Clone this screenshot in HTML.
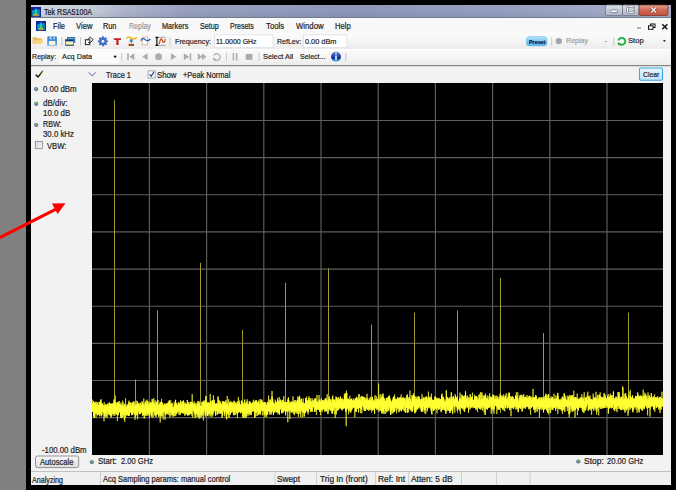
<!DOCTYPE html>
<html><head><meta charset="utf-8">
<style>
*{margin:0;padding:0;box-sizing:border-box}
html,body{width:676px;height:490px;overflow:hidden;background:#000;font-family:"Liberation Sans",sans-serif;color:#222;position:relative}
.a{position:absolute}
.t{position:absolute;white-space:nowrap;line-height:10px;transform-origin:0 0;-webkit-text-stroke:0.2px currentColor}
.sep{position:absolute;width:1px;background:#c9c9c9;border-right:1px solid #fff;width:2px}
</style></head><body>
<div class="a" style="left:0;top:0;width:26px;height:490px;background:#808080"></div>
<div class="a" style="left:31px;top:5px;width:640px;height:480px;background:#f2f2f2"></div>
<!-- title bar -->
<div class="a" style="left:31px;top:5px;width:640px;height:13px;background:linear-gradient(to right,#cdd1da 0%,#c6cad6 9%,#a9b0c8 15%,#939dbd 25%,#8a95b8 50%,#929dbe 75%,#a4aec8 100%)"></div>
<div class="a" style="left:31px;top:5px;width:640px;height:13px;background:linear-gradient(rgba(255,255,255,.06),rgba(255,255,255,0) 60%,rgba(0,0,0,.06))"></div>
<div class="a" style="left:31px;top:17px;width:640px;height:1px;background:#737b8c"></div>
<!-- menu bar -->
<div class="a" style="left:31px;top:18px;width:640px;height:15px;background:#f8f8f8"></div>
<!-- toolbars -->
<div class="a" style="left:31px;top:33px;width:640px;height:16px;background:linear-gradient(#fcfcfc,#f3f3f3 60%,#ececec)"></div>
<div class="a" style="left:31px;top:49px;width:640px;height:16px;background:linear-gradient(#fcfcfc,#f3f3f3 60%,#ececec)"></div>
<div class="a" style="left:31px;top:65px;width:640px;height:1px;background:#8a8a8a"></div>
<div class="a" style="left:31px;top:66px;width:640px;height:1px;background:#d8d8d8"></div>
<!-- plot -->
<svg class="a" style="left:92px;top:83px;background:#000" width="571" height="372" viewBox="0 0 571 372">
<path d="M57.40 0V372M114.60 0V372M171.80 0V372M229.00 0V372M286.20 0V372M343.40 0V372M400.60 0V372M457.80 0V372M515.00 0V372M0 37.45H571M0 74.60H571M0 111.75H571M0 148.90H571M0 186.05H571M0 223.20H571M0 260.35H571M0 297.50H571M0 334.65H571" stroke="#5e5e5e" stroke-width="1.15" fill="none"/>
<path d="M22.5 17.2V330M43.5 296.5V330M65.5 227.5V330M108.5 179.8V330M150.5 247.1V330M193.5 199.8V330M236.5 185.3V330M279.5 241.6V330M322.5 229.6V330M365.5 227.5V330M408.5 194.7V330M451.5 250.1V330M536.5 229.6V330" stroke="#a09c2a" stroke-width="1" fill="none"/>
<path d="M0.0 324.5L0.2 316.6 0.4 322.9 0.6 328.7 0.8 321.7 1.0 326.1 1.2 322.5 1.4 325.1 1.6 319.7 1.8 328.2 2.0 328.9 2.2 319.0 2.4 328.4 2.6 324.7 2.8 323.9 3.0 318.9 3.2 329.0 3.4 323.2 3.6 330.7 3.8 329.6 4.0 334.6 4.2 324.0 4.4 330.9 4.6 321.1 4.8 326.3 5.0 330.6 5.2 321.0 5.4 327.7 5.6 329.5 5.8 332.2 6.0 329.7 6.2 328.2 6.4 329.6 6.6 328.3 6.8 325.2 7.0 318.7 7.2 325.2 7.4 322.3 7.6 326.5 7.8 330.7 8.0 331.7 8.2 326.6 8.4 321.8 8.6 324.7 8.8 322.7 9.0 324.4 9.2 316.1 9.4 321.4 9.6 328.9 9.8 325.1 10.0 331.9 10.2 321.2 10.4 329.0 10.6 325.0 10.8 325.3 11.0 329.0 11.2 328.0 11.4 328.3 11.6 326.2 11.8 325.1 12.0 338.3 12.2 319.2 12.4 330.7 12.6 333.7 12.8 326.8 13.0 326.6 13.2 328.5 13.4 323.3 13.6 321.1 13.8 327.2 14.0 328.1 14.2 328.7 14.4 333.0 14.6 330.3 14.8 330.2 15.0 323.4 15.2 334.4 15.4 329.0 15.6 324.5 15.8 325.9 16.0 322.8 16.2 319.8 16.4 322.8 16.6 322.6 16.8 332.0 17.0 328.1 17.2 331.3 17.4 321.4 17.6 332.3 17.8 323.7 18.0 329.1 18.2 321.8 18.4 322.6 18.6 330.7 18.8 321.0 19.0 332.9 19.2 326.6 19.4 323.7 19.6 333.4 19.8 327.2 20.0 329.3 20.2 329.5 20.4 330.2 20.6 328.9 20.8 329.3 21.0 326.0 21.2 332.7 21.4 322.2 21.6 327.3 21.8 324.5 22.0 326.0 22.2 319.3 22.4 328.0 22.6 332.4 22.8 333.0 23.0 327.6 23.2 312.6 23.4 323.9 23.6 330.3 23.8 322.0 24.0 319.9 24.2 324.2 24.4 322.9 24.6 331.6 24.8 327.7 25.0 330.1 25.2 320.0 25.4 337.8 25.6 322.9 25.8 325.4 26.0 332.4 26.2 319.2 26.4 320.9 26.6 328.4 26.8 326.1 27.0 321.9 27.2 324.0 27.4 321.3 27.6 321.0 27.8 326.9 28.0 323.9 28.2 328.0 28.4 323.4 28.6 326.7 28.8 335.0 29.0 319.3 29.2 332.5 29.4 334.8 29.6 326.2 29.8 331.7 30.0 326.3 30.2 321.6 30.4 326.8 30.6 325.5 30.8 317.6 31.0 326.4 31.2 319.5 31.4 332.3 31.6 330.4 31.8 328.5 32.0 329.6 32.2 336.6 32.4 329.5 32.6 324.6 32.8 338.7 33.0 323.5 33.2 330.6 33.4 330.1 33.6 315.4 33.8 321.4 34.0 327.5 34.2 329.6 34.4 332.6 34.6 326.7 34.8 326.1 35.0 329.0 35.2 325.3 35.4 325.3 35.6 331.5 35.8 327.9 36.0 324.9 36.2 324.2 36.4 324.8 36.6 321.5 36.8 319.3 37.0 317.6 37.2 322.0 37.4 330.9 37.6 326.1 37.8 324.4 38.0 323.2 38.2 327.2 38.4 320.3 38.6 325.5 38.8 326.9 39.0 323.7 39.2 322.9 39.4 323.6 39.6 328.6 39.8 330.7 40.0 328.7 40.2 319.9 40.4 323.8 40.6 327.2 40.8 331.9 41.0 326.2 41.2 326.7 41.4 329.8 41.6 330.0 41.8 321.5 42.0 324.0 42.2 331.5 42.4 322.7 42.6 320.0 42.8 322.3 43.0 336.8 43.2 327.6 43.4 321.6 43.6 325.7 43.8 326.6 44.0 321.0 44.2 317.5 44.4 328.7 44.6 321.1 44.8 324.8 45.0 329.6 45.2 322.8 45.4 321.0 45.6 336.3 45.8 320.0 46.0 324.9 46.2 320.8 46.4 323.4 46.6 324.1 46.8 326.2 47.0 331.1 47.2 330.0 47.4 324.1 47.6 331.3 47.8 326.7 48.0 330.2 48.2 328.3 48.4 321.8 48.6 326.6 48.8 325.2 49.0 324.6 49.2 323.8 49.4 325.3 49.6 323.3 49.8 326.0 50.0 322.1 50.2 327.6 50.4 333.2 50.6 326.3 50.8 323.6 51.0 321.2 51.2 320.5 51.4 323.9 51.6 323.3 51.8 315.5 52.0 329.6 52.2 335.7 52.4 328.0 52.6 334.7 52.8 331.2 53.0 331.4 53.2 330.0 53.4 327.8 53.6 326.4 53.8 322.6 54.0 317.6 54.2 327.4 54.4 325.6 54.6 320.4 54.8 324.6 55.0 316.6 55.2 325.7 55.4 326.5 55.6 322.4 55.8 329.6 56.0 319.4 56.2 318.4 56.4 326.3 56.6 329.3 56.8 319.6 57.0 319.8 57.2 322.6 57.4 322.1 57.6 321.1 57.8 329.9 58.0 332.2 58.2 326.2 58.4 318.9 58.6 323.8 58.8 319.4 59.0 323.6 59.2 328.9 59.4 329.9 59.6 330.0 59.8 328.2 60.0 323.1 60.2 328.6 60.4 317.9 60.6 326.4 60.8 328.9 61.0 319.1 61.2 320.2 61.4 326.7 61.6 324.8 61.8 315.1 62.0 328.9 62.2 322.6 62.4 326.4 62.6 326.9 62.8 322.0 63.0 320.1 63.2 317.3 63.4 326.4 63.6 326.0 63.8 322.0 64.0 320.1 64.2 330.3 64.4 326.6 64.6 326.9 64.8 331.8 65.0 321.0 65.2 327.2 65.4 325.9 65.6 328.9 65.8 325.2 66.0 329.7 66.2 324.1 66.4 324.2 66.6 325.5 66.8 333.8 67.0 326.2 67.2 326.6 67.4 331.0 67.6 321.4 67.8 327.6 68.0 319.0 68.2 339.5 68.4 330.1 68.6 330.3 68.8 333.3 69.0 333.5 69.2 329.9 69.4 320.0 69.6 315.9 69.8 332.8 70.0 324.7 70.2 325.9 70.4 327.9 70.6 319.4 70.8 331.4 71.0 325.6 71.2 336.4 71.4 328.3 71.6 327.3 71.8 328.7 72.0 321.6 72.2 320.6 72.4 324.5 72.6 329.4 72.8 323.4 73.0 336.7 73.2 328.1 73.4 322.2 73.6 331.3 73.8 324.7 74.0 327.3 74.2 324.6 74.4 326.9 74.6 327.9 74.8 331.4 75.0 328.4 75.2 324.2 75.4 327.9 75.6 322.3 75.8 324.3 76.0 323.3 76.2 328.8 76.4 325.2 76.6 331.9 76.8 323.7 77.0 317.7 77.2 328.7 77.4 326.4 77.6 329.9 77.8 334.4 78.0 325.1 78.2 327.2 78.4 332.7 78.6 331.9 78.8 317.5 79.0 324.1 79.2 326.7 79.4 330.4 79.6 330.6 79.8 327.5 80.0 325.5 80.2 333.6 80.4 325.5 80.6 328.6 80.8 330.8 81.0 324.4 81.2 328.9 81.4 325.4 81.6 328.7 81.8 327.2 82.0 332.7 82.2 318.7 82.4 321.7 82.6 327.9 82.8 325.0 83.0 324.6 83.2 332.5 83.4 332.4 83.6 327.3 83.8 332.9 84.0 321.4 84.2 327.7 84.4 329.3 84.6 324.1 84.8 322.9 85.0 324.8 85.2 329.1 85.4 322.5 85.6 326.1 85.8 324.0 86.0 323.0 86.2 319.4 86.4 323.0 86.6 325.2 86.8 319.3 87.0 332.1 87.2 326.1 87.4 319.9 87.6 325.3 87.8 321.7 88.0 329.9 88.2 332.1 88.4 326.3 88.6 325.3 88.8 321.7 89.0 319.3 89.2 328.2 89.4 321.2 89.6 328.5 89.8 325.9 90.0 327.1 90.2 324.5 90.4 327.2 90.6 318.4 90.8 320.8 91.0 322.3 91.2 330.3 91.4 327.1 91.6 327.5 91.8 323.1 92.0 320.6 92.2 326.1 92.4 327.8 92.6 327.6 92.8 322.4 93.0 319.5 93.2 322.5 93.4 325.4 93.6 324.2 93.8 329.1 94.0 324.0 94.2 321.8 94.4 322.0 94.6 326.7 94.8 328.5 95.0 326.1 95.2 324.0 95.4 320.3 95.6 332.9 95.8 326.6 96.0 324.0 96.2 326.5 96.4 319.1 96.6 325.4 96.8 332.3 97.0 324.1 97.2 325.9 97.4 322.6 97.6 327.9 97.8 321.9 98.0 323.2 98.2 327.1 98.4 326.8 98.6 323.0 98.8 328.0 99.0 325.5 99.2 329.0 99.4 324.9 99.6 327.5 99.8 325.9 100.0 333.0 100.2 311.2 100.4 324.0 100.6 321.8 100.8 334.7 101.0 323.1 101.2 320.0 101.4 327.1 101.6 327.6 101.8 327.5 102.0 326.1 102.2 318.3 102.4 331.1 102.6 327.4 102.8 323.9 103.0 334.8 103.2 321.1 103.4 332.7 103.6 328.9 103.8 324.7 104.0 334.6 104.2 323.5 104.4 325.2 104.6 325.0 104.8 326.8 105.0 323.8 105.2 320.2 105.4 326.2 105.6 320.4 105.8 331.1 106.0 324.6 106.2 323.5 106.4 333.5 106.6 329.3 106.8 320.7 107.0 329.0 107.2 335.7 107.4 318.5 107.6 326.1 107.8 324.4 108.0 325.0 108.2 323.1 108.4 326.4 108.6 327.4 108.8 332.6 109.0 328.7 109.2 325.0 109.4 324.7 109.6 334.3 109.8 318.8 110.0 322.9 110.2 329.8 110.4 328.0 110.6 326.7 110.8 328.6 111.0 326.9 111.2 324.2 111.4 337.5 111.6 322.7 111.8 327.4 112.0 322.6 112.2 317.2 112.4 326.2 112.6 322.6 112.8 325.1 113.0 324.9 113.2 318.4 113.4 324.2 113.6 324.1 113.8 333.9 114.0 316.5 114.2 331.8 114.4 323.3 114.6 322.1 114.8 322.4 115.0 324.0 115.2 327.3 115.4 332.0 115.6 326.1 115.8 328.1 116.0 320.9 116.2 322.5 116.4 326.7 116.6 319.8 116.8 329.8 117.0 333.4 117.2 332.0 117.4 328.2 117.6 323.7 117.8 331.3 118.0 325.8 118.2 311.0 118.4 325.5 118.6 323.6 118.8 333.5 119.0 330.4 119.2 318.1 119.4 319.0 119.6 319.9 119.8 325.0 120.0 333.8 120.2 317.5 120.4 324.1 120.6 317.8 120.8 321.5 121.0 332.3 121.2 325.1 121.4 312.3 121.6 322.8 121.8 329.7 122.0 319.6 122.2 326.1 122.4 319.6 122.6 321.5 122.8 324.2 123.0 323.3 123.2 322.1 123.4 329.4 123.6 330.1 123.8 322.4 124.0 323.8 124.2 326.1 124.4 320.5 124.6 327.7 124.8 326.0 125.0 327.0 125.2 321.1 125.4 325.1 125.6 324.9 125.8 330.9 126.0 325.6 126.2 328.9 126.4 326.3 126.6 325.8 126.8 329.9 127.0 326.3 127.2 325.7 127.4 326.0 127.6 321.9 127.8 318.1 128.0 319.9 128.2 328.0 128.4 321.0 128.6 318.7 128.8 327.9 129.0 328.8 129.2 326.3 129.4 324.7 129.6 326.7 129.8 326.6 130.0 321.5 130.2 328.9 130.4 317.9 130.6 322.0 130.8 332.4 131.0 323.0 131.2 324.9 131.4 323.4 131.6 325.2 131.8 325.4 132.0 318.5 132.2 328.7 132.4 325.3 132.6 333.2 132.8 325.6 133.0 326.4 133.2 322.9 133.4 329.0 133.6 321.8 133.8 320.9 134.0 329.3 134.2 334.8 134.4 325.3 134.6 330.9 134.8 322.3 135.0 323.6 135.2 313.0 135.4 317.7 135.6 330.1 135.8 327.7 136.0 321.6 136.2 327.8 136.4 326.5 136.6 316.3 136.8 329.0 137.0 327.0 137.2 324.8 137.4 326.9 137.6 325.8 137.8 325.8 138.0 319.8 138.2 325.2 138.4 323.3 138.6 321.6 138.8 317.9 139.0 325.6 139.2 322.0 139.4 323.4 139.6 322.4 139.8 324.9 140.0 323.9 140.2 327.7 140.4 320.0 140.6 319.7 140.8 326.7 141.0 321.4 141.2 321.9 141.4 331.6 141.6 326.6 141.8 332.1 142.0 318.4 142.2 328.7 142.4 331.5 142.6 322.4 142.8 323.5 143.0 326.1 143.2 323.3 143.4 324.8 143.6 332.0 143.8 330.7 144.0 322.8 144.2 321.4 144.4 321.9 144.6 321.1 144.8 330.4 145.0 320.1 145.2 328.0 145.4 334.9 145.6 320.1 145.8 321.7 146.0 325.0 146.2 318.6 146.4 313.9 146.6 321.5 146.8 326.1 147.0 319.2 147.2 317.3 147.4 321.3 147.6 323.5 147.8 326.6 148.0 321.0 148.2 323.9 148.4 327.7 148.6 323.2 148.8 328.3 149.0 322.2 149.2 326.4 149.4 327.6 149.6 326.8 149.8 317.6 150.0 328.2 150.2 322.0 150.4 333.4 150.6 325.1 150.8 324.3 151.0 323.8 151.2 324.2 151.4 331.2 151.6 327.7 151.8 322.9 152.0 323.0 152.2 321.6 152.4 334.7 152.6 326.2 152.8 324.3 153.0 324.1 153.2 334.5 153.4 325.7 153.6 320.6 153.8 327.7 154.0 328.2 154.2 325.0 154.4 324.5 154.6 332.9 154.8 323.9 155.0 319.7 155.2 316.3 155.4 319.7 155.6 326.2 155.8 328.0 156.0 333.2 156.2 329.4 156.4 327.6 156.6 325.6 156.8 323.7 157.0 328.4 157.2 318.0 157.4 319.8 157.6 323.2 157.8 329.8 158.0 328.4 158.2 322.3 158.4 322.3 158.6 327.1 158.8 330.1 159.0 322.0 159.2 326.4 159.4 326.1 159.6 320.5 159.8 319.9 160.0 326.7 160.2 323.5 160.4 322.6 160.6 325.6 160.8 319.4 161.0 326.1 161.2 317.7 161.4 325.5 161.6 321.3 161.8 316.7 162.0 328.3 162.2 320.7 162.4 327.0 162.6 330.2 162.8 327.4 163.0 328.7 163.2 333.8 163.4 328.0 163.6 325.2 163.8 329.8 164.0 321.1 164.2 323.7 164.4 326.4 164.6 320.6 164.8 320.6 165.0 323.0 165.2 322.6 165.4 322.6 165.6 320.2 165.8 325.1 166.0 320.6 166.2 321.8 166.4 320.3 166.6 326.0 166.8 322.7 167.0 322.4 167.2 320.5 167.4 325.2 167.6 326.7 167.8 330.8 168.0 316.2 168.2 332.2 168.4 325.3 168.6 323.9 168.8 316.3 169.0 327.2 169.2 323.2 169.4 323.8 169.6 328.4 169.8 319.9 170.0 323.0 170.2 326.1 170.4 332.3 170.6 329.9 170.8 328.5 171.0 319.6 171.2 324.8 171.4 319.6 171.6 328.0 171.8 324.6 172.0 322.1 172.2 320.7 172.4 325.2 172.6 320.7 172.8 334.4 173.0 323.2 173.2 331.0 173.4 324.8 173.6 322.9 173.8 324.5 174.0 329.4 174.2 333.5 174.4 325.0 174.6 334.1 174.8 325.3 175.0 319.6 175.2 326.9 175.4 326.9 175.6 327.0 175.8 322.5 176.0 327.1 176.2 317.8 176.4 321.3 176.6 312.5 176.8 328.4 177.0 320.5 177.2 322.4 177.4 323.6 177.6 316.6 177.8 325.1 178.0 322.2 178.2 323.0 178.4 317.0 178.6 326.9 178.8 323.7 179.0 328.7 179.2 331.7 179.4 323.6 179.6 318.5 179.8 324.4 180.0 308.0 180.2 326.7 180.4 327.7 180.6 324.4 180.8 327.6 181.0 327.8 181.2 324.4 181.4 324.3 181.6 324.7 181.8 330.1 182.0 320.8 182.2 329.0 182.4 324.8 182.6 321.4 182.8 329.9 183.0 326.9 183.2 316.6 183.4 320.7 183.6 324.1 183.8 325.6 184.0 319.4 184.2 325.5 184.4 326.3 184.6 319.3 184.8 329.3 185.0 318.6 185.2 321.1 185.4 325.0 185.6 314.9 185.8 321.1 186.0 331.3 186.2 328.6 186.4 326.6 186.6 328.1 186.8 321.0 187.0 320.5 187.2 314.0 187.4 323.8 187.6 318.9 187.8 320.6 188.0 323.9 188.2 324.9 188.4 316.9 188.6 320.7 188.8 323.8 189.0 321.1 189.2 322.2 189.4 327.3 189.6 322.2 189.8 318.2 190.0 330.3 190.2 321.0 190.4 324.6 190.6 326.8 190.8 326.9 191.0 323.4 191.2 324.0 191.4 316.5 191.6 322.8 191.8 313.0 192.0 327.4 192.2 322.2 192.4 326.1 192.6 322.3 192.8 321.9 193.0 321.8 193.2 326.5 193.4 321.5 193.6 329.2 193.8 319.5 194.0 327.5 194.2 321.8 194.4 322.2 194.6 318.9 194.8 328.8 195.0 326.3 195.2 323.7 195.4 325.0 195.6 328.5 195.8 339.2 196.0 316.1 196.2 321.1 196.4 314.2 196.6 320.1 196.8 321.0 197.0 322.7 197.2 325.5 197.4 327.4 197.6 320.9 197.8 336.1 198.0 326.8 198.2 322.9 198.4 321.3 198.6 322.5 198.8 326.0 199.0 321.0 199.2 324.6 199.4 323.4 199.6 327.3 199.8 327.2 200.0 326.0 200.2 328.6 200.4 329.4 200.6 319.2 200.8 324.2 201.0 313.4 201.2 325.0 201.4 324.9 201.6 319.4 201.8 327.8 202.0 318.4 202.2 319.6 202.4 332.3 202.6 327.4 202.8 326.9 203.0 320.9 203.2 321.5 203.4 317.1 203.6 320.7 203.8 328.1 204.0 319.4 204.2 328.9 204.4 324.1 204.6 323.9 204.8 317.9 205.0 327.0 205.2 319.9 205.4 318.0 205.6 316.9 205.8 318.3 206.0 328.1 206.2 323.4 206.4 333.8 206.6 326.9 206.8 318.9 207.0 323.4 207.2 327.8 207.4 320.0 207.6 312.8 207.8 322.7 208.0 315.0 208.2 321.8 208.4 321.4 208.6 317.5 208.8 334.5 209.0 317.7 209.2 323.2 209.4 327.0 209.6 327.0 209.8 328.9 210.0 325.1 210.2 320.7 210.4 319.7 210.6 325.4 210.8 334.3 211.0 323.4 211.2 315.5 211.4 328.9 211.6 323.0 211.8 323.1 212.0 325.8 212.2 321.7 212.4 322.1 212.6 323.2 212.8 325.7 213.0 322.8 213.2 324.1 213.4 319.5 213.6 320.0 213.8 315.2 214.0 322.0 214.2 319.8 214.4 320.0 214.6 313.6 214.8 319.0 215.0 328.3 215.2 320.6 215.4 317.5 215.6 318.1 215.8 322.4 216.0 331.4 216.2 317.0 216.4 319.5 216.6 329.5 216.8 324.5 217.0 313.3 217.2 319.3 217.4 321.1 217.6 321.1 217.8 325.9 218.0 324.3 218.2 319.9 218.4 315.4 218.6 326.9 218.8 328.4 219.0 323.7 219.2 325.7 219.4 325.8 219.6 321.0 219.8 322.2 220.0 315.1 220.2 325.4 220.4 323.0 220.6 328.8 220.8 316.4 221.0 323.7 221.2 323.1 221.4 319.9 221.6 319.6 221.8 323.7 222.0 323.7 222.2 321.3 222.4 325.3 222.6 322.0 222.8 320.0 223.0 325.2 223.2 326.4 223.4 323.0 223.6 326.5 223.8 319.0 224.0 317.2 224.2 316.5 224.4 329.6 224.6 331.8 224.8 316.1 225.0 312.0 225.2 321.2 225.4 325.4 225.6 319.3 225.8 322.6 226.0 318.1 226.2 318.2 226.4 327.0 226.6 325.3 226.8 325.8 227.0 312.0 227.2 320.3 227.4 319.0 227.6 324.8 227.8 318.5 228.0 328.6 228.2 328.0 228.4 323.3 228.6 332.1 228.8 319.9 229.0 321.6 229.2 316.7 229.4 319.1 229.6 323.8 229.8 321.9 230.0 327.0 230.2 321.4 230.4 324.3 230.6 320.1 230.8 324.7 231.0 326.0 231.2 319.9 231.4 324.6 231.6 319.2 231.8 323.7 232.0 319.4 232.2 325.1 232.4 327.9 232.6 328.8 232.8 323.2 233.0 318.9 233.2 315.5 233.4 325.3 233.6 324.6 233.8 319.3 234.0 328.9 234.2 322.2 234.4 324.7 234.6 321.4 234.8 319.4 235.0 320.5 235.2 311.1 235.4 325.0 235.6 322.6 235.8 322.9 236.0 319.6 236.2 317.3 236.4 317.6 236.6 322.5 236.8 324.6 237.0 321.8 237.2 321.1 237.4 321.7 237.6 326.4 237.8 319.2 238.0 327.3 238.2 321.9 238.4 319.8 238.6 316.6 238.8 324.0 239.0 325.6 239.2 323.4 239.4 323.8 239.6 328.0 239.8 320.8 240.0 321.9 240.2 317.7 240.4 325.7 240.6 315.3 240.8 312.4 241.0 317.7 241.2 327.5 241.4 320.3 241.6 320.1 241.8 325.1 242.0 325.6 242.2 319.2 242.4 322.8 242.6 331.2 242.8 328.4 243.0 327.2 243.2 334.9 243.4 325.6 243.6 322.5 243.8 313.6 244.0 325.3 244.2 325.9 244.4 320.2 244.6 320.8 244.8 321.0 245.0 325.9 245.2 327.0 245.4 328.0 245.6 321.4 245.8 327.3 246.0 321.2 246.2 324.2 246.4 314.0 246.6 321.1 246.8 320.4 247.0 320.6 247.2 326.3 247.4 322.1 247.6 323.7 247.8 319.1 248.0 324.9 248.2 324.7 248.4 325.2 248.6 316.4 248.8 320.5 249.0 324.3 249.2 323.7 249.4 326.2 249.6 326.1 249.8 316.5 250.0 327.5 250.2 321.8 250.4 317.3 250.6 325.9 250.8 316.4 251.0 323.9 251.2 317.8 251.4 316.4 251.6 321.7 251.8 318.6 252.0 320.9 252.2 320.1 252.4 324.1 252.6 323.9 252.8 321.5 253.0 320.2 253.2 323.5 253.4 316.7 253.6 326.7 253.8 329.2 254.0 326.9 254.2 343.2 254.4 307.7 254.6 323.3 254.8 324.8 255.0 326.4 255.2 320.4 255.4 318.1 255.6 321.0 255.8 315.8 256.0 323.7 256.2 322.0 256.4 319.8 256.6 331.2 256.8 318.0 257.0 324.9 257.2 322.3 257.4 324.4 257.6 328.1 257.8 312.8 258.0 317.0 258.2 328.7 258.4 325.5 258.6 316.6 258.8 323.4 259.0 327.7 259.2 317.2 259.4 323.4 259.6 322.0 259.8 319.9 260.0 323.8 260.2 324.5 260.4 321.4 260.6 325.4 260.8 320.6 261.0 321.3 261.2 321.8 261.4 315.6 261.6 316.5 261.8 324.1 262.0 318.3 262.2 324.3 262.4 322.2 262.6 316.8 262.8 334.2 263.0 317.5 263.2 315.4 263.4 322.9 263.6 316.8 263.8 323.3 264.0 322.9 264.2 318.5 264.4 319.7 264.6 320.9 264.8 313.7 265.0 319.8 265.2 317.3 265.4 318.0 265.6 321.4 265.8 321.4 266.0 319.5 266.2 322.5 266.4 325.4 266.6 326.8 266.8 311.2 267.0 316.9 267.2 311.0 267.4 318.4 267.6 321.2 267.8 321.4 268.0 324.0 268.2 321.4 268.4 319.4 268.6 330.1 268.8 318.8 269.0 316.9 269.2 321.8 269.4 325.0 269.6 320.9 269.8 330.3 270.0 326.2 270.2 319.5 270.4 313.6 270.6 322.0 270.8 320.5 271.0 321.9 271.2 317.4 271.4 324.5 271.6 319.7 271.8 323.2 272.0 318.2 272.2 324.2 272.4 323.9 272.6 318.5 272.8 321.4 273.0 317.4 273.2 327.1 273.4 320.9 273.6 320.3 273.8 323.9 274.0 323.6 274.2 320.1 274.4 322.1 274.6 315.9 274.8 318.3 275.0 310.8 275.2 317.3 275.4 320.9 275.6 326.6 275.8 320.3 276.0 322.0 276.2 322.0 276.4 323.9 276.6 327.9 276.8 323.2 277.0 317.5 277.2 315.1 277.4 317.1 277.6 319.9 277.8 327.4 278.0 319.6 278.2 315.4 278.4 315.3 278.6 313.7 278.8 317.9 279.0 326.7 279.2 318.0 279.4 322.7 279.6 323.6 279.8 321.2 280.0 320.5 280.2 316.7 280.4 328.1 280.6 320.4 280.8 325.2 281.0 324.3 281.2 321.6 281.4 320.4 281.6 323.4 281.8 322.3 282.0 322.4 282.2 319.6 282.4 321.9 282.6 331.0 282.8 318.0 283.0 312.1 283.2 317.0 283.4 320.3 283.6 317.9 283.8 316.0 284.0 318.3 284.2 313.0 284.4 316.7 284.6 324.2 284.8 327.1 285.0 322.9 285.2 321.3 285.4 315.5 285.6 326.3 285.8 323.0 286.0 321.9 286.2 323.7 286.4 319.9 286.6 300.6 286.8 328.9 287.0 313.5 287.2 320.1 287.4 328.1 287.6 319.7 287.8 326.4 288.0 323.8 288.2 311.1 288.4 315.4 288.6 321.3 288.8 319.0 289.0 320.7 289.2 326.7 289.4 314.8 289.6 326.2 289.8 325.0 290.0 319.6 290.2 322.0 290.4 323.5 290.6 313.8 290.8 324.3 291.0 328.4 291.2 310.5 291.4 320.6 291.6 323.6 291.8 316.3 292.0 319.6 292.2 314.9 292.4 322.6 292.6 325.0 292.8 325.2 293.0 321.8 293.2 319.2 293.4 327.1 293.6 327.7 293.8 321.5 294.0 318.1 294.2 327.8 294.4 316.6 294.6 329.6 294.8 321.7 295.0 314.7 295.2 316.8 295.4 320.5 295.6 328.5 295.8 328.1 296.0 320.2 296.2 314.5 296.4 319.3 296.6 319.8 296.8 318.6 297.0 324.1 297.2 316.6 297.4 320.7 297.6 312.4 297.8 324.3 298.0 322.3 298.2 315.4 298.4 329.3 298.6 321.3 298.8 321.9 299.0 327.7 299.2 331.4 299.4 327.6 299.6 321.7 299.8 324.4 300.0 319.1 300.2 320.4 300.4 317.7 300.6 319.0 300.8 325.3 301.0 322.2 301.2 321.3 301.4 316.1 301.6 316.6 301.8 313.4 302.0 320.7 302.2 317.0 302.4 323.4 302.6 311.5 302.8 319.4 303.0 328.0 303.2 321.7 303.4 319.7 303.6 322.3 303.8 317.5 304.0 324.9 304.2 324.2 304.4 324.5 304.6 330.4 304.8 319.1 305.0 326.9 305.2 316.7 305.4 320.3 305.6 323.8 305.8 325.9 306.0 325.5 306.2 320.6 306.4 317.6 306.6 318.8 306.8 318.9 307.0 323.8 307.2 314.9 307.4 324.6 307.6 326.9 307.8 320.2 308.0 325.3 308.2 325.4 308.4 319.9 308.6 322.1 308.8 316.7 309.0 316.1 309.2 311.5 309.4 328.1 309.6 317.8 309.8 320.0 310.0 316.2 310.2 322.4 310.4 320.9 310.6 323.0 310.8 326.7 311.0 323.6 311.2 323.4 311.4 320.0 311.6 327.5 311.8 317.5 312.0 318.7 312.2 321.6 312.4 319.2 312.6 329.0 312.8 316.8 313.0 319.3 313.2 324.5 313.4 318.3 313.6 314.7 313.8 325.0 314.0 323.5 314.2 322.6 314.4 320.4 314.6 324.8 314.8 315.5 315.0 325.0 315.2 319.3 315.4 311.2 315.6 320.7 315.8 317.0 316.0 325.3 316.2 328.3 316.4 324.0 316.6 329.3 316.8 324.4 317.0 314.0 317.2 320.8 317.4 318.3 317.6 316.0 317.8 312.0 318.0 307.6 318.2 318.9 318.4 317.2 318.6 316.7 318.8 325.2 319.0 327.7 319.2 323.3 319.4 328.6 319.6 320.2 319.8 321.8 320.0 321.1 320.2 322.4 320.4 328.9 320.6 315.6 320.8 313.9 321.0 316.2 321.2 319.1 321.4 310.2 321.6 321.9 321.8 317.7 322.0 321.5 322.2 320.4 322.4 312.4 322.6 323.4 322.8 325.3 323.0 325.1 323.2 317.8 323.4 322.5 323.6 321.4 323.8 318.3 324.0 329.0 324.2 325.5 324.4 327.0 324.6 315.4 324.8 319.2 325.0 325.2 325.2 322.6 325.4 322.3 325.6 313.6 325.8 320.8 326.0 324.1 326.2 321.2 326.4 315.1 326.6 313.2 326.8 324.4 327.0 320.3 327.2 317.4 327.4 316.7 327.6 323.6 327.8 321.6 328.0 319.7 328.2 325.7 328.4 317.6 328.6 316.2 328.8 324.0 329.0 327.9 329.2 316.1 329.4 316.1 329.6 324.4 329.8 318.9 330.0 311.1 330.2 312.7 330.4 328.2 330.6 323.1 330.8 328.7 331.0 325.7 331.2 326.3 331.4 320.2 331.6 320.2 331.8 316.4 332.0 321.7 332.2 318.1 332.4 314.6 332.6 320.0 332.8 328.6 333.0 330.6 333.2 314.3 333.4 316.7 333.6 324.0 333.8 330.7 334.0 322.6 334.2 313.5 334.4 322.3 334.6 318.0 334.8 318.1 335.0 321.6 335.2 327.6 335.4 328.4 335.6 317.4 335.8 321.1 336.0 321.7 336.2 322.2 336.4 308.6 336.6 322.7 336.8 315.4 337.0 325.3 337.2 323.1 337.4 315.2 337.6 319.0 337.8 313.5 338.0 320.8 338.2 319.6 338.4 317.7 338.6 321.4 338.8 327.0 339.0 318.8 339.2 320.8 339.4 310.6 339.6 331.1 339.8 317.3 340.0 331.5 340.2 319.3 340.4 318.8 340.6 318.0 340.8 320.5 341.0 323.5 341.2 323.3 341.4 327.3 341.6 320.9 341.8 318.9 342.0 320.9 342.2 323.1 342.4 314.2 342.6 315.5 342.8 318.1 343.0 313.1 343.2 319.4 343.4 326.1 343.6 315.3 343.8 316.8 344.0 314.5 344.2 325.0 344.4 315.3 344.6 326.5 344.8 315.8 345.0 330.3 345.2 324.0 345.4 325.3 345.6 320.3 345.8 323.3 346.0 323.7 346.2 326.0 346.4 326.6 346.6 318.2 346.8 321.1 347.0 314.8 347.2 325.8 347.4 316.4 347.6 318.8 347.8 326.2 348.0 319.5 348.2 316.0 348.4 317.1 348.6 322.2 348.8 316.8 349.0 329.2 349.2 319.6 349.4 323.0 349.6 328.6 349.8 320.1 350.0 319.2 350.2 310.5 350.4 327.0 350.6 318.7 350.8 326.8 351.0 313.7 351.2 325.4 351.4 321.7 351.6 326.9 351.8 323.1 352.0 324.8 352.2 323.0 352.4 322.3 352.6 319.2 352.8 324.1 353.0 317.1 353.2 316.7 353.4 320.6 353.6 320.1 353.8 322.4 354.0 328.4 354.2 323.0 354.4 319.4 354.6 317.7 354.8 313.8 355.0 318.7 355.2 327.5 355.4 314.1 355.6 326.0 355.8 321.6 356.0 323.1 356.2 322.6 356.4 319.1 356.6 327.3 356.8 321.8 357.0 325.3 357.2 324.2 357.4 320.6 357.6 329.9 357.8 326.2 358.0 314.0 358.2 330.0 358.4 320.1 358.6 322.1 358.8 320.3 359.0 323.2 359.2 323.9 359.4 316.8 359.6 316.1 359.8 319.2 360.0 316.4 360.2 315.2 360.4 319.7 360.6 319.5 360.8 323.3 361.0 313.9 361.2 317.1 361.4 320.9 361.6 322.5 361.8 315.1 362.0 318.0 362.2 326.5 362.4 316.5 362.6 324.0 362.8 329.6 363.0 325.4 363.2 311.2 363.4 317.8 363.6 323.6 363.8 323.8 364.0 321.4 364.2 315.2 364.4 317.6 364.6 323.4 364.8 316.3 365.0 319.1 365.2 322.8 365.4 321.3 365.6 322.5 365.8 317.8 366.0 320.7 366.2 317.7 366.4 325.7 366.6 319.6 366.8 318.1 367.0 319.8 367.2 319.3 367.4 323.5 367.6 328.1 367.8 325.5 368.0 309.7 368.2 320.1 368.4 331.0 368.6 321.3 368.8 324.0 369.0 323.2 369.2 317.4 369.4 315.3 369.6 311.6 369.8 312.9 370.0 323.0 370.2 317.0 370.4 326.3 370.6 323.2 370.8 321.2 371.0 321.1 371.2 319.2 371.4 325.0 371.6 313.9 371.8 318.5 372.0 313.6 372.2 324.9 372.4 312.8 372.6 317.7 372.8 324.1 373.0 312.4 373.2 319.7 373.4 322.7 373.6 309.5 373.8 325.4 374.0 321.2 374.2 316.7 374.4 316.5 374.6 322.1 374.8 323.1 375.0 315.4 375.2 314.4 375.4 316.1 375.6 323.5 375.8 323.7 376.0 318.6 376.2 314.4 376.4 317.4 376.6 320.5 376.8 314.6 377.0 319.4 377.2 319.0 377.4 315.0 377.6 322.0 377.8 319.3 378.0 322.3 378.2 323.9 378.4 314.8 378.6 320.7 378.8 315.4 379.0 316.5 379.2 317.7 379.4 314.8 379.6 324.9 379.8 319.6 380.0 324.7 380.2 323.3 380.4 309.7 380.6 315.2 380.8 322.9 381.0 320.7 381.2 325.2 381.4 319.7 381.6 316.9 381.8 323.3 382.0 317.8 382.2 321.2 382.4 324.1 382.6 311.6 382.8 319.5 383.0 315.6 383.2 319.7 383.4 318.5 383.6 319.7 383.8 321.0 384.0 327.2 384.2 321.6 384.4 317.2 384.6 325.8 384.8 319.5 385.0 325.9 385.2 319.6 385.4 327.6 385.6 329.0 385.8 317.3 386.0 319.2 386.2 321.6 386.4 318.4 386.6 318.3 386.8 312.0 387.0 313.9 387.2 321.4 387.4 311.1 387.6 315.7 387.8 320.6 388.0 320.5 388.2 317.7 388.4 309.3 388.6 318.1 388.8 322.7 389.0 321.2 389.2 309.5 389.4 315.6 389.6 311.8 389.8 319.5 390.0 309.5 390.2 316.5 390.4 323.3 390.6 327.7 390.8 320.9 391.0 324.1 391.2 325.4 391.4 317.5 391.6 321.2 391.8 325.1 392.0 323.3 392.2 329.5 392.4 320.0 392.6 312.4 392.8 324.7 393.0 321.1 393.2 312.7 393.4 310.4 393.6 317.6 393.8 322.0 394.0 324.7 394.2 317.2 394.4 314.9 394.6 325.7 394.8 325.3 395.0 317.3 395.2 312.4 395.4 319.0 395.6 323.1 395.8 318.7 396.0 325.2 396.2 319.2 396.4 321.4 396.6 317.3 396.8 321.3 397.0 312.7 397.2 320.2 397.4 317.0 397.6 310.2 397.8 324.5 398.0 317.8 398.2 321.7 398.4 315.2 398.6 322.0 398.8 316.4 399.0 314.6 399.2 330.9 399.4 319.9 399.6 317.5 399.8 326.8 400.0 321.6 400.2 318.3 400.4 321.6 400.6 322.7 400.8 322.5 401.0 328.1 401.2 326.6 401.4 315.0 401.6 320.1 401.8 322.9 402.0 330.7 402.2 318.8 402.4 319.4 402.6 318.1 402.8 319.5 403.0 319.4 403.2 318.2 403.4 313.3 403.6 318.2 403.8 323.2 404.0 315.7 404.2 312.6 404.4 321.2 404.6 317.3 404.8 331.1 405.0 325.0 405.2 312.9 405.4 322.9 405.6 322.0 405.8 325.0 406.0 318.0 406.2 320.7 406.4 321.0 406.6 321.5 406.8 322.8 407.0 313.7 407.2 323.4 407.4 313.9 407.6 317.8 407.8 320.9 408.0 322.1 408.2 324.1 408.4 324.7 408.6 319.3 408.8 321.0 409.0 315.7 409.2 321.0 409.4 314.5 409.6 318.6 409.8 320.7 410.0 318.6 410.2 313.7 410.4 319.2 410.6 320.1 410.8 314.1 411.0 319.3 411.2 318.7 411.4 320.8 411.6 311.5 411.8 322.6 412.0 319.9 412.2 317.0 412.4 327.6 412.6 325.8 412.8 328.3 413.0 313.7 413.2 312.5 413.4 319.2 413.6 320.4 413.8 321.0 414.0 316.3 414.2 310.1 414.4 314.9 414.6 320.0 414.8 318.7 415.0 318.3 415.2 319.6 415.4 314.2 415.6 322.1 415.8 314.9 416.0 322.9 416.2 311.6 416.4 314.3 416.6 314.1 416.8 315.1 417.0 322.2 417.2 323.4 417.4 317.7 417.6 324.2 417.8 324.5 418.0 325.5 418.2 319.3 418.4 316.7 418.6 313.1 418.8 320.6 419.0 333.2 419.2 319.8 419.4 319.6 419.6 324.4 419.8 319.7 420.0 316.3 420.2 321.6 420.4 312.9 420.6 318.3 420.8 318.0 421.0 322.3 421.2 318.1 421.4 321.9 421.6 318.2 421.8 322.9 422.0 318.1 422.2 323.5 422.4 318.1 422.6 316.5 422.8 321.7 423.0 316.7 423.2 315.9 423.4 321.0 423.6 316.6 423.8 326.6 424.0 318.1 424.2 315.4 424.4 309.1 424.6 321.7 424.8 318.8 425.0 322.7 425.2 326.2 425.4 320.1 425.6 318.7 425.8 309.3 426.0 328.7 426.2 329.2 426.4 318.8 426.6 321.6 426.8 318.4 427.0 324.7 427.2 320.9 427.4 320.5 427.6 320.9 427.8 315.8 428.0 315.8 428.2 314.9 428.4 319.1 428.6 319.8 428.8 317.3 429.0 319.2 429.2 313.5 429.4 324.2 429.6 322.7 429.8 319.8 430.0 326.2 430.2 328.0 430.4 316.0 430.6 313.4 430.8 313.4 431.0 314.3 431.2 321.8 431.4 325.6 431.6 325.5 431.8 321.9 432.0 317.5 432.2 320.6 432.4 324.9 432.6 325.3 432.8 323.5 433.0 321.1 433.2 314.3 433.4 320.7 433.6 319.8 433.8 316.8 434.0 316.5 434.2 320.7 434.4 323.3 434.6 317.5 434.8 323.9 435.0 312.0 435.2 322.5 435.4 319.9 435.6 319.6 435.8 323.1 436.0 313.5 436.2 320.0 436.4 326.3 436.6 325.4 436.8 315.8 437.0 322.4 437.2 315.6 437.4 321.2 437.6 321.7 437.8 315.5 438.0 325.6 438.2 327.2 438.4 326.9 438.6 331.7 438.8 313.8 439.0 324.2 439.2 317.6 439.4 319.9 439.6 318.1 439.8 323.6 440.0 319.2 440.2 322.2 440.4 316.4 440.6 318.8 440.8 319.1 441.0 305.9 441.2 318.2 441.4 317.0 441.6 327.0 441.8 318.3 442.0 315.8 442.2 319.0 442.4 320.2 442.6 322.5 442.8 326.1 443.0 318.8 443.2 321.8 443.4 313.9 443.6 323.6 443.8 322.5 444.0 320.5 444.2 321.7 444.4 320.6 444.6 325.9 444.8 321.4 445.0 318.9 445.2 317.8 445.4 317.4 445.6 323.2 445.8 319.1 446.0 321.5 446.2 316.0 446.4 322.6 446.6 326.2 446.8 323.0 447.0 315.7 447.2 322.8 447.4 334.6 447.6 330.3 447.8 320.2 448.0 314.7 448.2 319.9 448.4 317.9 448.6 325.0 448.8 321.8 449.0 316.1 449.2 317.1 449.4 317.1 449.6 324.8 449.8 319.3 450.0 327.0 450.2 314.0 450.4 326.2 450.6 321.3 450.8 318.0 451.0 318.3 451.2 317.8 451.4 319.1 451.6 319.8 451.8 320.1 452.0 320.5 452.2 314.3 452.4 313.4 452.6 322.2 452.8 317.9 453.0 316.8 453.2 314.5 453.4 320.3 453.6 322.4 453.8 319.2 454.0 313.6 454.2 320.3 454.4 325.3 454.6 327.6 454.8 318.5 455.0 322.3 455.2 320.0 455.4 325.7 455.6 315.8 455.8 317.0 456.0 321.7 456.2 322.7 456.4 321.9 456.6 331.3 456.8 325.1 457.0 319.5 457.2 324.6 457.4 322.3 457.6 322.9 457.8 327.2 458.0 317.9 458.2 329.6 458.4 325.0 458.6 330.0 458.8 323.0 459.0 316.1 459.2 313.3 459.4 323.0 459.6 321.8 459.8 315.5 460.0 316.2 460.2 318.6 460.4 318.4 460.6 320.6 460.8 321.5 461.0 325.5 461.2 326.0 461.4 320.0 461.6 322.5 461.8 323.7 462.0 310.8 462.2 317.5 462.4 321.5 462.6 316.3 462.8 323.1 463.0 316.1 463.2 323.1 463.4 315.7 463.6 320.5 463.8 321.9 464.0 312.4 464.2 322.7 464.4 316.8 464.6 320.3 464.8 323.3 465.0 324.6 465.2 317.2 465.4 322.8 465.6 321.3 465.8 330.8 466.0 321.4 466.2 313.1 466.4 318.5 466.6 317.7 466.8 321.5 467.0 319.4 467.2 322.3 467.4 323.1 467.6 317.7 467.8 325.6 468.0 322.0 468.2 326.1 468.4 322.9 468.6 322.0 468.8 321.0 469.0 319.0 469.2 315.5 469.4 322.9 469.6 318.7 469.8 318.9 470.0 322.5 470.2 317.8 470.4 330.9 470.6 320.3 470.8 327.5 471.0 324.4 471.2 321.3 471.4 319.2 471.6 314.7 471.8 325.3 472.0 324.9 472.2 310.6 472.4 314.2 472.6 322.2 472.8 317.2 473.0 319.3 473.2 320.5 473.4 322.2 473.6 320.6 473.8 312.8 474.0 322.5 474.2 317.2 474.4 318.4 474.6 321.3 474.8 323.0 475.0 320.6 475.2 328.1 475.4 326.5 475.6 324.6 475.8 312.5 476.0 318.4 476.2 319.8 476.4 314.1 476.6 317.5 476.8 331.1 477.0 319.1 477.2 334.2 477.4 320.4 477.6 312.0 477.8 314.3 478.0 313.2 478.2 316.7 478.4 312.5 478.6 316.6 478.8 316.8 479.0 322.4 479.2 326.6 479.4 319.6 479.6 325.0 479.8 326.3 480.0 319.6 480.2 317.5 480.4 316.7 480.6 312.1 480.8 316.1 481.0 326.4 481.2 316.5 481.4 321.7 481.6 317.7 481.8 307.7 482.0 326.9 482.2 317.0 482.4 317.5 482.6 315.8 482.8 317.0 483.0 334.5 483.2 323.8 483.4 315.4 483.6 314.1 483.8 319.5 484.0 321.6 484.2 320.0 484.4 321.4 484.6 316.9 484.8 325.6 485.0 322.0 485.2 310.6 485.4 332.2 485.6 322.2 485.8 316.8 486.0 322.5 486.2 317.4 486.4 316.4 486.6 323.4 486.8 320.5 487.0 316.8 487.2 324.0 487.4 325.1 487.6 321.3 487.8 320.3 488.0 318.5 488.2 315.1 488.4 316.2 488.6 318.4 488.8 323.8 489.0 324.4 489.2 316.0 489.4 323.4 489.6 322.9 489.8 311.2 490.0 318.1 490.2 327.0 490.4 321.6 490.6 328.7 490.8 314.0 491.0 314.4 491.2 325.0 491.4 320.9 491.6 317.9 491.8 320.6 492.0 315.5 492.2 309.3 492.4 327.7 492.6 321.7 492.8 325.8 493.0 321.1 493.2 322.3 493.4 327.7 493.6 322.3 493.8 327.1 494.0 326.8 494.2 324.4 494.4 315.4 494.6 317.9 494.8 314.4 495.0 319.1 495.2 311.7 495.4 316.5 495.6 317.4 495.8 308.7 496.0 325.7 496.2 327.5 496.4 326.1 496.6 326.7 496.8 317.2 497.0 321.8 497.2 314.9 497.4 319.0 497.6 321.6 497.8 315.8 498.0 312.5 498.2 319.5 498.4 321.1 498.6 322.0 498.8 324.3 499.0 322.2 499.2 319.4 499.4 316.3 499.6 331.8 499.8 317.5 500.0 319.2 500.2 325.8 500.4 322.4 500.6 325.7 500.8 323.6 501.0 324.5 501.2 310.5 501.4 322.7 501.6 314.7 501.8 319.9 502.0 320.3 502.2 323.1 502.4 322.4 502.6 317.2 502.8 323.2 503.0 317.3 503.2 325.4 503.4 323.6 503.6 318.8 503.8 320.7 504.0 308.8 504.2 325.4 504.4 315.3 504.6 331.5 504.8 318.2 505.0 328.9 505.2 321.5 505.4 325.0 505.6 312.3 505.8 324.1 506.0 312.2 506.2 323.8 506.4 322.4 506.6 332.0 506.8 332.4 507.0 320.2 507.2 318.1 507.4 316.4 507.6 315.6 507.8 323.9 508.0 317.3 508.2 309.4 508.4 325.9 508.6 313.7 508.8 315.8 509.0 320.4 509.2 317.9 509.4 320.7 509.6 325.8 509.8 322.0 510.0 324.3 510.2 322.1 510.4 323.7 510.6 324.1 510.8 322.2 511.0 319.2 511.2 319.5 511.4 317.8 511.6 316.2 511.8 315.5 512.0 318.2 512.2 314.9 512.4 316.4 512.6 319.2 512.8 322.9 513.0 320.9 513.2 311.7 513.4 317.9 513.6 318.0 513.8 325.0 514.0 317.9 514.2 321.1 514.4 315.4 514.6 318.3 514.8 315.9 515.0 324.9 515.2 320.5 515.4 315.9 515.6 312.6 515.8 322.7 516.0 314.9 516.2 311.1 516.4 323.5 516.6 319.3 516.8 321.7 517.0 320.0 517.2 324.1 517.4 315.6 517.6 320.4 517.8 321.2 518.0 325.1 518.2 310.4 518.4 318.0 518.6 323.6 518.8 323.7 519.0 318.5 519.2 313.1 519.4 320.5 519.6 312.2 519.8 321.3 520.0 320.2 520.2 314.9 520.4 315.6 520.6 315.7 520.8 312.0 521.0 320.0 521.2 318.2 521.4 318.2 521.6 326.8 521.8 322.5 522.0 315.0 522.2 326.7 522.4 321.5 522.6 318.7 522.8 321.0 523.0 320.4 523.2 321.5 523.4 317.6 523.6 320.3 523.8 314.6 524.0 313.5 524.2 325.8 524.4 319.8 524.6 327.4 524.8 316.6 525.0 329.2 525.2 316.1 525.4 318.3 525.6 319.9 525.8 314.8 526.0 314.7 526.2 325.8 526.4 316.0 526.6 316.5 526.8 319.3 527.0 318.3 527.2 320.4 527.4 320.9 527.6 316.9 527.8 322.7 528.0 316.2 528.2 319.5 528.4 314.6 528.6 318.8 528.8 320.3 529.0 322.5 529.2 322.4 529.4 318.7 529.6 318.0 529.8 315.5 530.0 318.4 530.2 319.8 530.4 320.9 530.6 303.3 530.8 316.2 531.0 304.5 531.2 319.5 531.4 314.1 531.6 321.3 531.8 318.1 532.0 327.2 532.2 310.7 532.4 321.8 532.6 315.6 532.8 315.3 533.0 321.5 533.2 320.6 533.4 314.4 533.6 317.0 533.8 326.1 534.0 316.2 534.2 315.3 534.4 318.4 534.6 318.0 534.8 324.2 535.0 315.8 535.2 324.4 535.4 315.1 535.6 320.0 535.8 316.1 536.0 332.7 536.2 320.3 536.4 320.5 536.6 325.2 536.8 321.5 537.0 308.5 537.2 313.4 537.4 321.2 537.6 319.6 537.8 327.1 538.0 316.3 538.2 323.3 538.4 306.9 538.6 325.9 538.8 322.5 539.0 318.5 539.2 324.7 539.4 323.5 539.6 313.8 539.8 323.2 540.0 319.7 540.2 319.9 540.4 318.6 540.6 322.8 540.8 324.3 541.0 329.4 541.2 317.9 541.4 317.0 541.6 318.2 541.8 318.5 542.0 320.4 542.2 317.1 542.4 318.1 542.6 316.8 542.8 315.1 543.0 319.5 543.2 317.6 543.4 316.6 543.6 318.0 543.8 314.2 544.0 326.5 544.2 321.0 544.4 313.4 544.6 324.8 544.8 319.3 545.0 329.4 545.2 329.8 545.4 316.5 545.6 323.1 545.8 312.8 546.0 323.9 546.2 326.8 546.4 320.3 546.6 312.3 546.8 326.3 547.0 323.2 547.2 314.6 547.4 319.2 547.6 321.0 547.8 313.4 548.0 320.6 548.2 323.6 548.4 316.7 548.6 312.4 548.8 320.2 549.0 317.8 549.2 317.5 549.4 324.4 549.6 323.4 549.8 325.3 550.0 323.7 550.2 325.7 550.4 323.1 550.6 328.0 550.8 312.7 551.0 314.2 551.2 306.7 551.4 323.2 551.6 321.0 551.8 322.7 552.0 321.5 552.2 326.3 552.4 322.0 552.6 319.9 552.8 309.6 553.0 319.4 553.2 323.6 553.4 310.9 553.6 318.9 553.8 314.7 554.0 318.1 554.2 311.8 554.4 320.0 554.6 324.2 554.8 314.0 555.0 313.2 555.2 318.5 555.4 319.3 555.6 332.3 555.8 316.3 556.0 309.3 556.2 317.1 556.4 317.9 556.6 322.0 556.8 314.4 557.0 320.4 557.2 324.8 557.4 316.7 557.6 324.5 557.8 320.2 558.0 333.6 558.2 322.8 558.4 326.8 558.6 317.7 558.8 324.6 559.0 319.6 559.2 321.8 559.4 314.2 559.6 320.5 559.8 315.3 560.0 321.8 560.2 315.4 560.4 319.2 560.6 320.7 560.8 323.4 561.0 321.8 561.2 316.6 561.4 318.0 561.6 315.7 561.8 317.9 562.0 324.6 562.2 319.9 562.4 317.2 562.6 311.5 562.8 328.7 563.0 322.4 563.2 315.3 563.4 315.3 563.6 318.3 563.8 316.5 564.0 315.5 564.2 323.4 564.4 318.8 564.6 323.3 564.8 315.7 565.0 315.7 565.2 319.1 565.4 321.5 565.6 323.9 565.8 316.3 566.0 316.1 566.2 324.1 566.4 317.4 566.6 319.6 566.8 318.0 567.0 316.3 567.2 315.3 567.4 324.9 567.6 314.0 567.8 323.0 568.0 330.1 568.2 320.8 568.4 320.7 568.6 313.8 568.8 319.0 569.0 317.8 569.2 321.7 569.4 315.7 569.6 319.7 569.8 312.4 570.0 308.7 570.2 320.3 570.4 318.2 570.6 323.1 570.8 321.8 571.0 318.1" stroke="rgba(230,230,40,0.75)" stroke-width="1" fill="none"/>
<path d="M0.0 321.3L0.1 320.5 0.2 326.3 0.3 329.0 0.4 324.6 0.5 324.9 0.6 320.1 0.7 327.6 0.8 326.8 0.9 324.1 1.0 319.9 1.1 327.7 1.2 323.9 1.3 321.3 1.4 324.1 1.5 318.0 1.6 330.6 1.7 331.2 1.8 333.1 1.9 329.4 2.0 323.6 2.1 334.8 2.2 326.6 2.3 334.5 2.4 328.0 2.5 325.8 2.6 326.6 2.7 327.8 2.8 320.1 2.9 325.7 3.0 326.7 3.1 328.4 3.2 327.1 3.3 326.9 3.4 327.6 3.5 321.7 3.6 330.3 3.7 324.2 3.8 326.0 3.9 328.0 4.0 318.8 4.1 324.7 4.2 322.3 4.3 324.0 4.4 323.0 4.5 329.1 4.6 324.6 4.7 324.8 4.8 323.8 4.9 326.0 5.0 325.6 5.1 329.3 5.2 323.7 5.3 330.9 5.4 319.4 5.5 332.2 5.6 328.4 5.7 328.8 5.8 327.8 5.9 328.8 6.0 327.2 6.1 328.6 6.2 327.3 6.3 324.8 6.4 325.8 6.5 330.5 6.6 322.4 6.7 326.1 6.8 325.3 6.9 330.6 7.0 331.9 7.1 321.9 7.2 326.6 7.3 325.7 7.4 327.1 7.5 323.2 7.6 319.3 7.7 325.7 7.8 333.3 7.9 326.8 8.0 325.8 8.1 331.2 8.2 326.7 8.3 318.9 8.4 323.7 8.5 317.5 8.6 328.3 8.7 327.8 8.8 329.3 8.9 327.6 9.0 328.0 9.1 327.7 9.2 321.2 9.3 324.8 9.4 327.6 9.5 322.4 9.6 333.3 9.7 329.3 9.8 320.4 9.9 326.8 10.0 325.0 10.1 325.1 10.2 321.0 10.3 322.6 10.4 326.8 10.5 320.6 10.6 327.9 10.7 322.9 10.8 328.4 10.9 325.0 11.0 323.5 11.1 326.4 11.2 322.6 11.3 325.4 11.4 323.8 11.5 322.5 11.6 325.3 11.7 325.8 11.8 322.6 11.9 327.0 12.0 330.2 12.1 327.7 12.2 330.2 12.3 323.1 12.4 332.8 12.5 324.2 12.6 328.0 12.7 322.8 12.8 327.3 12.9 329.4 13.0 324.4 13.1 322.0 13.2 326.3 13.3 323.3 13.4 329.7 13.5 329.1 13.6 323.2 13.7 326.5 13.8 323.5 13.9 334.4 14.0 325.9 14.1 327.4 14.2 326.7 14.3 328.4 14.4 324.0 14.5 326.8 14.6 323.7 14.7 328.1 14.8 331.7 14.9 321.3 15.0 325.9 15.1 326.3 15.2 324.2 15.3 325.2 15.4 321.5 15.5 324.2 15.6 327.5 15.7 324.7 15.8 324.9 15.9 328.0 16.0 326.7 16.1 323.2 16.2 327.3 16.3 325.4 16.4 324.8 16.5 325.7 16.6 327.2 16.7 330.3 16.8 326.8 16.9 328.7 17.0 327.5 17.1 328.1 17.2 321.3 17.3 327.2 17.4 325.4 17.5 319.6 17.6 329.2 17.7 326.6 17.8 326.3 17.9 324.3 18.0 328.9 18.1 323.9 18.2 326.3 18.3 331.7 18.4 320.6 18.5 326.0 18.6 326.5 18.7 327.1 18.8 331.6 18.9 328.1 19.0 332.5 19.1 334.4 19.2 325.0 19.3 327.1 19.4 320.7 19.5 327.9 19.6 325.7 19.7 327.9 19.8 325.6 19.9 326.7 20.0 325.8 20.1 331.0 20.2 327.0 20.3 327.4 20.4 325.1 20.5 327.6 20.6 320.4 20.7 322.6 20.8 321.4 20.9 328.3 21.0 326.3 21.1 327.5 21.2 325.5 21.3 326.3 21.4 324.7 21.5 324.3 21.6 325.1 21.7 322.1 21.8 331.2 21.9 330.1 22.0 316.6 22.1 327.5 22.2 328.5 22.3 324.2 22.4 323.6 22.5 323.7 22.6 324.3 22.7 326.4 22.8 318.2 22.9 328.1 23.0 331.4 23.1 326.2 23.2 324.6 23.3 321.1 23.4 320.0 23.5 326.7 23.6 322.0 23.7 328.9 23.8 324.9 23.9 322.8 24.0 328.5 24.1 327.2 24.2 327.9 24.3 327.2 24.4 331.1 24.5 324.8 24.6 327.3 24.7 330.1 24.8 325.4 24.9 324.9 25.0 325.9 25.1 328.2 25.2 319.2 25.3 327.0 25.4 327.3 25.5 319.4 25.6 323.3 25.7 321.7 25.8 326.4 25.9 324.5 26.0 323.1 26.1 324.2 26.2 324.9 26.3 321.2 26.4 331.9 26.5 328.3 26.6 328.8 26.7 329.6 26.8 320.9 26.9 323.6 27.0 328.4 27.1 318.1 27.2 325.0 27.3 325.6 27.4 323.9 27.5 326.0 27.6 323.9 27.7 326.3 27.8 329.0 27.9 327.1 28.0 323.7 28.1 325.0 28.2 330.0 28.3 324.9 28.4 321.2 28.5 323.7 28.6 333.3 28.7 323.4 28.8 322.7 28.9 326.2 29.0 321.9 29.1 324.6 29.2 329.6 29.3 323.3 29.4 324.6 29.5 326.0 29.6 324.0 29.7 322.2 29.8 335.0 29.9 324.2 30.0 327.6 30.1 322.9 30.2 322.7 30.3 331.6 30.4 325.8 30.5 328.0 30.6 328.9 30.7 334.1 30.8 329.3 30.9 325.2 31.0 325.1 31.1 326.2 31.2 326.2 31.3 327.1 31.4 323.2 31.5 326.1 31.6 328.9 31.7 327.9 31.8 331.9 31.9 326.7 32.0 326.9 32.1 329.1 32.2 327.0 32.3 327.2 32.4 320.9 32.5 328.5 32.6 322.5 32.7 326.4 32.8 328.0 32.9 323.0 33.0 324.9 33.1 326.9 33.2 334.5 33.3 330.3 33.4 326.7 33.5 323.0 33.6 324.0 33.7 329.5 33.8 322.9 33.9 322.2 34.0 329.0 34.1 324.2 34.2 327.0 34.3 324.0 34.4 327.9 34.5 331.5 34.6 325.8 34.7 326.1 34.8 326.4 34.9 326.7 35.0 330.9 35.1 328.3 35.2 327.3 35.3 331.0 35.4 321.4 35.5 326.9 35.6 328.1 35.7 324.7 35.8 331.2 35.9 332.2 36.0 323.7 36.1 327.2 36.2 333.0 36.3 332.2 36.4 323.2 36.5 324.8 36.6 325.9 36.7 319.6 36.8 330.0 36.9 325.0 37.0 333.0 37.1 328.5 37.2 327.3 37.3 331.8 37.4 325.2 37.5 327.4 37.6 326.5 37.7 322.7 37.8 327.5 37.9 322.7 38.0 319.0 38.1 328.6 38.2 324.7 38.3 325.6 38.4 329.5 38.5 326.7 38.6 323.5 38.7 329.5 38.8 321.4 38.9 323.8 39.0 327.2 39.1 323.5 39.2 325.7 39.3 329.2 39.4 329.5 39.5 325.2 39.6 322.8 39.7 328.3 39.8 332.3 39.9 327.1 40.0 329.5 40.1 319.5 40.2 321.2 40.3 322.7 40.4 331.4 40.5 324.0 40.6 319.7 40.7 325.3 40.8 327.0 40.9 326.7 41.0 326.1 41.1 327.5 41.2 322.2 41.3 321.8 41.4 327.7 41.5 326.6 41.6 322.5 41.7 318.7 41.8 319.4 41.9 318.5 42.0 325.6 42.1 328.1 42.2 327.1 42.3 328.6 42.4 330.1 42.5 323.6 42.6 327.5 42.7 330.3 42.8 326.5 42.9 329.8 43.0 329.2 43.1 329.8 43.2 328.5 43.3 325.3 43.4 330.6 43.5 322.9 43.6 333.7 43.7 328.7 43.8 326.5 43.9 330.3 44.0 326.2 44.1 324.0 44.2 328.6 44.3 322.1 44.4 324.2 44.5 326.5 44.6 327.1 44.7 328.0 44.8 331.8 44.9 324.9 45.0 322.4 45.1 326.0 45.2 326.6 45.3 328.4 45.4 333.2 45.5 318.3 45.6 321.9 45.7 327.4 45.8 328.0 45.9 324.1 46.0 322.5 46.1 328.3 46.2 324.3 46.3 326.9 46.4 324.5 46.5 327.9 46.6 328.2 46.7 326.6 46.8 327.8 46.9 320.4 47.0 321.9 47.1 326.5 47.2 326.9 47.3 329.2 47.4 329.0 47.5 324.0 47.6 328.6 47.7 323.2 47.8 330.8 47.9 322.5 48.0 331.0 48.1 321.4 48.2 319.6 48.3 330.5 48.4 327.9 48.5 325.3 48.6 323.1 48.7 324.1 48.8 329.2 48.9 325.3 49.0 325.0 49.1 324.5 49.2 324.5 49.3 326.6 49.4 329.1 49.5 322.2 49.6 324.5 49.7 324.5 49.8 329.4 49.9 321.8 50.0 322.0 50.1 318.4 50.2 329.7 50.3 325.6 50.4 324.9 50.5 328.4 50.6 320.4 50.7 321.7 50.8 325.0 50.9 331.5 51.0 326.8 51.1 326.6 51.2 326.9 51.3 329.8 51.4 332.4 51.5 327.2 51.6 324.5 51.7 326.2 51.8 325.1 51.9 324.9 52.0 321.9 52.1 325.7 52.2 328.3 52.3 325.2 52.4 324.0 52.5 328.2 52.6 327.7 52.7 329.3 52.8 325.8 52.9 324.5 53.0 332.3 53.1 319.4 53.2 328.9 53.3 327.2 53.4 323.5 53.5 320.1 53.6 323.9 53.7 326.7 53.8 330.4 53.9 320.5 54.0 327.3 54.1 332.8 54.2 327.0 54.3 324.0 54.4 330.1 54.5 322.7 54.6 331.6 54.7 323.9 54.8 324.6 54.9 323.0 55.0 328.1 55.1 318.0 55.2 327.0 55.3 327.3 55.4 330.2 55.5 330.5 55.6 323.2 55.7 324.6 55.8 329.9 55.9 331.6 56.0 332.8 56.1 331.3 56.2 324.3 56.3 327.6 56.4 323.6 56.5 330.3 56.6 329.8 56.7 330.2 56.8 327.8 56.9 321.5 57.0 326.8 57.1 329.3 57.2 329.0 57.3 328.6 57.4 324.9 57.5 325.4 57.6 334.5 57.7 327.7 57.8 326.8 57.9 331.2 58.0 324.9 58.1 319.4 58.2 327.9 58.3 327.3 58.4 324.5 58.5 324.2 58.6 326.7 58.7 327.5 58.8 328.3 58.9 321.5 59.0 328.6 59.1 327.1 59.2 320.0 59.3 328.2 59.4 324.1 59.5 330.1 59.6 333.6 59.7 323.6 59.8 321.7 59.9 324.1 60.0 326.4 60.1 330.5 60.2 316.0 60.3 324.8 60.4 323.6 60.5 327.5 60.6 322.5 60.7 323.1 60.8 324.4 60.9 334.4 61.0 322.7 61.1 324.3 61.2 327.4 61.3 324.3 61.4 323.7 61.5 323.8 61.6 319.4 61.7 327.4 61.8 328.5 61.9 327.6 62.0 327.9 62.1 324.5 62.2 320.0 62.3 325.7 62.4 323.6 62.5 322.6 62.6 329.6 62.7 330.2 62.8 332.2 62.9 326.4 63.0 324.6 63.1 325.0 63.2 321.6 63.3 332.8 63.4 329.0 63.5 326.9 63.6 328.6 63.7 328.9 63.8 326.2 63.9 325.0 64.0 333.9 64.1 323.6 64.2 318.6 64.3 319.3 64.4 328.0 64.5 322.6 64.6 329.7 64.7 327.1 64.8 327.6 64.9 327.0 65.0 319.3 65.1 331.3 65.2 328.7 65.3 330.4 65.4 326.7 65.5 325.3 65.6 323.6 65.7 323.0 65.8 327.2 65.9 317.0 66.0 329.3 66.1 321.6 66.2 324.6 66.3 324.9 66.4 330.0 66.5 328.2 66.6 333.5 66.7 326.1 66.8 328.1 66.9 330.8 67.0 328.0 67.1 327.5 67.2 328.8 67.3 330.4 67.4 321.1 67.5 325.1 67.6 324.1 67.7 325.8 67.8 328.3 67.9 322.3 68.0 332.6 68.1 326.5 68.2 323.9 68.3 326.0 68.4 331.7 68.5 330.7 68.6 324.2 68.7 328.2 68.8 318.9 68.9 328.5 69.0 322.0 69.1 328.4 69.2 326.0 69.3 319.8 69.4 326.8 69.5 328.8 69.6 323.0 69.7 323.8 69.8 320.9 69.9 326.3 70.0 333.5 70.1 324.6 70.2 322.4 70.3 326.7 70.4 321.3 70.5 325.3 70.6 324.6 70.7 325.3 70.8 322.4 70.9 328.8 71.0 329.3 71.1 322.6 71.2 325.8 71.3 322.7 71.4 322.7 71.5 322.9 71.6 327.9 71.7 327.3 71.8 322.3 71.9 323.1 72.0 327.0 72.1 327.5 72.2 328.1 72.3 327.8 72.4 328.5 72.5 322.3 72.6 327.3 72.7 329.3 72.8 321.7 72.9 326.6 73.0 320.6 73.1 323.9 73.2 324.1 73.3 324.3 73.4 329.5 73.5 324.3 73.6 328.4 73.7 332.1 73.8 326.3 73.9 321.7 74.0 327.5 74.1 330.2 74.2 324.8 74.3 326.9 74.4 321.7 74.5 325.7 74.6 320.4 74.7 328.1 74.8 329.7 74.9 325.3 75.0 326.0 75.1 322.4 75.2 327.4 75.3 329.3 75.4 326.6 75.5 326.7 75.6 320.5 75.7 331.0 75.8 324.8 75.9 326.5 76.0 325.5 76.1 326.9 76.2 320.8 76.3 319.1 76.4 325.4 76.5 320.5 76.6 327.7 76.7 325.5 76.8 325.7 76.9 326.3 77.0 324.2 77.1 321.6 77.2 323.4 77.3 328.7 77.4 329.8 77.5 328.2 77.6 317.3 77.7 325.0 77.8 327.9 77.9 325.3 78.0 326.1 78.1 324.8 78.2 324.1 78.3 322.5 78.4 325.8 78.5 328.2 78.6 323.5 78.7 320.8 78.8 327.6 78.9 328.5 79.0 320.8 79.1 323.6 79.2 322.2 79.3 326.2 79.4 322.1 79.5 327.3 79.6 321.4 79.7 321.9 79.8 327.0 79.9 332.0 80.0 324.0 80.1 320.0 80.2 322.6 80.3 330.4 80.4 327.7 80.5 330.6 80.6 325.0 80.7 325.9 80.8 329.6 80.9 325.4 81.0 324.1 81.1 326.6 81.2 331.1 81.3 329.9 81.4 324.2 81.5 328.2 81.6 327.8 81.7 329.6 81.8 325.8 81.9 333.5 82.0 326.4 82.1 329.0 82.2 327.7 82.3 321.6 82.4 323.4 82.5 329.1 82.6 323.1 82.7 327.2 82.8 328.1 82.9 324.3 83.0 328.2 83.1 329.8 83.2 322.2 83.3 326.2 83.4 326.3 83.5 326.9 83.6 316.8 83.7 326.0 83.8 323.1 83.9 324.2 84.0 321.1 84.1 325.6 84.2 320.1 84.3 322.6 84.4 326.9 84.5 323.9 84.6 326.7 84.7 323.1 84.8 330.9 84.9 326.9 85.0 326.7 85.1 325.3 85.2 325.8 85.3 325.2 85.4 322.3 85.5 324.9 85.6 326.5 85.7 328.2 85.8 325.2 85.9 322.6 86.0 324.6 86.1 323.0 86.2 322.2 86.3 329.3 86.4 320.5 86.5 327.0 86.6 327.6 86.7 326.3 86.8 325.7 86.9 323.3 87.0 322.3 87.1 322.9 87.2 326.6 87.3 322.6 87.4 323.5 87.5 325.3 87.6 323.5 87.7 321.1 87.8 326.8 87.9 327.9 88.0 323.9 88.1 327.6 88.2 328.4 88.3 330.9 88.4 330.7 88.5 325.2 88.6 324.9 88.7 317.5 88.8 325.8 88.9 322.0 89.0 321.9 89.1 329.6 89.2 327.5 89.3 323.5 89.4 322.6 89.5 322.5 89.6 328.3 89.7 325.8 89.8 329.5 89.9 326.5 90.0 325.0 90.1 329.4 90.2 320.1 90.3 318.8 90.4 327.7 90.5 322.0 90.6 326.4 90.7 325.0 90.8 327.8 90.9 322.8 91.0 330.4 91.1 326.0 91.2 325.4 91.3 326.3 91.4 317.5 91.5 330.0 91.6 328.2 91.7 318.5 91.8 320.5 91.9 326.4 92.0 330.0 92.1 328.1 92.2 327.2 92.3 326.1 92.4 325.6 92.5 326.4 92.6 328.1 92.7 328.7 92.8 328.0 92.9 332.6 93.0 325.2 93.1 327.1 93.2 322.9 93.3 328.0 93.4 320.6 93.5 330.5 93.6 321.7 93.7 322.9 93.8 322.3 93.9 321.6 94.0 325.0 94.1 325.4 94.2 331.4 94.3 320.9 94.4 328.1 94.5 325.5 94.6 324.5 94.7 324.4 94.8 321.3 94.9 324.6 95.0 323.9 95.1 327.3 95.2 326.1 95.3 317.2 95.4 331.3 95.5 324.6 95.6 323.3 95.7 323.7 95.8 328.0 95.9 326.8 96.0 326.0 96.1 329.0 96.2 324.0 96.3 332.1 96.4 327.1 96.5 325.4 96.6 321.4 96.7 327.7 96.8 326.3 96.9 324.8 97.0 320.9 97.1 326.3 97.2 325.4 97.3 328.5 97.4 331.1 97.5 331.6 97.6 325.8 97.7 323.2 97.8 326.9 97.9 329.3 98.0 328.3 98.1 319.1 98.2 322.8 98.3 326.7 98.4 325.5 98.5 329.3 98.6 331.1 98.7 325.0 98.8 329.2 98.9 318.7 99.0 321.6 99.1 323.9 99.2 325.1 99.3 330.8 99.4 321.0 99.5 330.2 99.6 328.1 99.7 320.5 99.8 319.6 99.9 327.6 100.0 321.5 100.1 323.6 100.2 324.8 100.3 324.1 100.4 324.8 100.5 319.5 100.6 321.9 100.7 323.3 100.8 324.4 100.9 320.5 101.0 322.5 101.1 326.5 101.2 322.8 101.3 328.4 101.4 328.1 101.5 322.9 101.6 323.2 101.7 326.4 101.8 327.0 101.9 324.1 102.0 327.9 102.1 327.5 102.2 325.2 102.3 322.6 102.4 324.8 102.5 326.3 102.6 325.8 102.7 321.0 102.8 330.0 102.9 320.9 103.0 320.0 103.1 324.3 103.2 324.3 103.3 329.1 103.4 323.6 103.5 325.2 103.6 329.3 103.7 324.7 103.8 325.9 103.9 323.3 104.0 331.1 104.1 324.6 104.2 322.9 104.3 324.0 104.4 330.5 104.5 325.0 104.6 325.0 104.7 325.8 104.8 329.1 104.9 324.6 105.0 321.9 105.1 322.3 105.2 319.5 105.3 326.5 105.4 330.4 105.5 324.4 105.6 325.5 105.7 324.7 105.8 325.5 105.9 333.9 106.0 325.2 106.1 317.9 106.2 326.4 106.3 327.6 106.4 325.9 106.5 325.4 106.6 325.8 106.7 323.0 106.8 331.2 106.9 331.3 107.0 329.8 107.1 328.0 107.2 325.4 107.3 322.7 107.4 327.3 107.5 328.5 107.6 320.5 107.7 326.6 107.8 323.3 107.9 325.7 108.0 335.0 108.1 327.9 108.2 329.2 108.3 324.0 108.4 325.1 108.5 322.8 108.6 327.7 108.7 323.7 108.8 326.5 108.9 327.9 109.0 323.1 109.1 326.7 109.2 323.1 109.3 323.5 109.4 331.4 109.5 326.6 109.6 326.1 109.7 323.0 109.8 327.3 109.9 328.1 110.0 327.4 110.1 328.0 110.2 332.5 110.3 328.5 110.4 319.4 110.5 322.8 110.6 326.8 110.7 325.6 110.8 327.5 110.9 330.0 111.0 323.2 111.1 325.9 111.2 326.8 111.3 318.2 111.4 326.2 111.5 320.9 111.6 329.8 111.7 329.6 111.8 322.2 111.9 325.7 112.0 320.4 112.1 320.5 112.2 319.0 112.3 325.7 112.4 323.1 112.5 321.1 112.6 321.5 112.7 325.7 112.8 325.3 112.9 327.2 113.0 326.1 113.1 332.5 113.2 324.9 113.3 321.9 113.4 319.9 113.5 327.2 113.6 329.1 113.7 327.5 113.8 321.0 113.9 312.9 114.0 323.5 114.1 320.6 114.2 324.7 114.3 321.7 114.4 327.5 114.5 319.6 114.6 328.6 114.7 325.1 114.8 326.0 114.9 326.3 115.0 327.1 115.1 321.8 115.2 324.0 115.3 322.2 115.4 324.5 115.5 332.9 115.6 320.5 115.7 331.0 115.8 324.5 115.9 320.2 116.0 319.2 116.1 323.6 116.2 327.2 116.3 331.3 116.4 323.4 116.5 326.3 116.6 322.4 116.7 325.3 116.8 325.1 116.9 319.7 117.0 322.4 117.1 320.2 117.2 322.1 117.3 330.7 117.4 327.1 117.5 330.8 117.6 327.0 117.7 324.8 117.8 324.8 117.9 329.0 118.0 320.9 118.1 325.6 118.2 321.4 118.3 324.4 118.4 324.0 118.5 329.3 118.6 318.6 118.7 319.3 118.8 324.8 118.9 323.6 119.0 322.3 119.1 323.7 119.2 331.1 119.3 329.0 119.4 327.2 119.5 329.4 119.6 323.1 119.7 322.7 119.8 324.0 119.9 328.3 120.0 327.9 120.1 323.0 120.2 325.3 120.3 332.1 120.4 318.3 120.5 317.2 120.6 325.1 120.7 322.3 120.8 324.1 120.9 322.0 121.0 324.0 121.1 328.3 121.2 325.6 121.3 326.9 121.4 320.5 121.5 327.0 121.6 323.7 121.7 327.1 121.8 325.3 121.9 319.7 122.0 325.0 122.1 316.8 122.2 316.8 122.3 323.1 122.4 320.2 122.5 324.3 122.6 324.4 122.7 327.9 122.8 324.2 122.9 321.1 123.0 323.3 123.1 327.9 123.2 323.5 123.3 321.2 123.4 324.6 123.5 325.0 123.6 332.7 123.7 327.1 123.8 323.6 123.9 320.5 124.0 322.4 124.1 323.9 124.2 325.5 124.3 322.3 124.4 321.9 124.5 326.8 124.6 327.9 124.7 322.0 124.8 324.1 124.9 322.3 125.0 320.4 125.1 323.2 125.2 331.8 125.3 327.2 125.4 327.1 125.5 323.8 125.6 329.6 125.7 324.2 125.8 323.4 125.9 324.1 126.0 313.5 126.1 318.4 126.2 324.5 126.3 321.2 126.4 325.6 126.5 326.0 126.6 328.1 126.7 328.7 126.8 324.3 126.9 317.0 127.0 321.7 127.1 330.7 127.2 327.9 127.3 326.9 127.4 323.7 127.5 320.2 127.6 326.6 127.7 328.1 127.8 325.2 127.9 322.1 128.0 324.8 128.1 321.0 128.2 322.2 128.3 328.9 128.4 330.2 128.5 330.6 128.6 328.5 128.7 322.7 128.8 321.0 128.9 320.1 129.0 324.6 129.1 324.7 129.2 326.1 129.3 327.6 129.4 321.8 129.5 324.0 129.6 323.1 129.7 330.3 129.8 324.1 129.9 327.7 130.0 321.8 130.1 334.6 130.2 331.9 130.3 323.4 130.4 326.9 130.5 326.8 130.6 329.3 130.7 321.7 130.8 328.2 130.9 322.3 131.0 320.4 131.1 318.3 131.2 324.1 131.3 327.3 131.4 325.8 131.5 323.2 131.6 326.0 131.7 325.3 131.8 324.4 131.9 319.3 132.0 323.4 132.1 322.3 132.2 319.1 132.3 323.9 132.4 319.9 132.5 319.3 132.6 330.8 132.7 322.5 132.8 326.8 132.9 319.9 133.0 321.6 133.1 328.9 133.2 328.2 133.3 321.7 133.4 325.3 133.5 319.0 133.6 325.8 133.7 321.2 133.8 327.2 133.9 317.4 134.0 329.1 134.1 323.2 134.2 321.2 134.3 326.7 134.4 331.2 134.5 329.3 134.6 322.6 134.7 336.3 134.8 323.7 134.9 322.2 135.0 327.3 135.1 320.5 135.2 327.5 135.3 325.9 135.4 329.6 135.5 328.7 135.6 327.0 135.7 327.5 135.8 329.9 135.9 324.6 136.0 324.8 136.1 331.2 136.2 322.8 136.3 322.0 136.4 331.4 136.5 323.8 136.6 328.4 136.7 324.9 136.8 322.6 136.9 325.1 137.0 334.7 137.1 325.3 137.2 328.9 137.3 324.5 137.4 325.3 137.5 327.4 137.6 324.7 137.7 321.2 137.8 322.2 137.9 318.9 138.0 321.8 138.1 324.6 138.2 331.9 138.3 319.9 138.4 321.0 138.5 327.1 138.6 330.1 138.7 323.0 138.8 319.2 138.9 326.4 139.0 325.1 139.1 327.0 139.2 322.4 139.3 319.8 139.4 324.6 139.5 325.4 139.6 321.5 139.7 324.0 139.8 329.7 139.9 323.7 140.0 323.3 140.1 326.7 140.2 324.6 140.3 319.8 140.4 319.6 140.5 326.8 140.6 325.5 140.7 323.2 140.8 320.9 140.9 327.5 141.0 328.9 141.1 328.7 141.2 325.3 141.3 323.3 141.4 321.2 141.5 330.9 141.6 327.2 141.7 324.7 141.8 326.9 141.9 332.3 142.0 318.8 142.1 317.8 142.2 323.7 142.3 327.9 142.4 326.8 142.5 326.3 142.6 328.6 142.7 323.0 142.8 328.9 142.9 324.4 143.0 326.7 143.1 325.3 143.2 320.2 143.3 319.5 143.4 322.8 143.5 326.7 143.6 323.8 143.7 325.7 143.8 324.4 143.9 326.3 144.0 322.9 144.1 320.6 144.2 326.0 144.3 329.6 144.4 328.0 144.5 323.9 144.6 324.3 144.7 328.1 144.8 324.9 144.9 329.1 145.0 325.8 145.1 330.1 145.2 318.4 145.3 319.2 145.4 328.2 145.5 331.4 145.6 326.3 145.7 325.7 145.8 325.9 145.9 329.7 146.0 323.5 146.1 326.1 146.2 322.2 146.3 329.0 146.4 321.0 146.5 326.9 146.6 324.5 146.7 329.6 146.8 325.0 146.9 326.6 147.0 324.5 147.1 328.5 147.2 321.7 147.3 328.3 147.4 319.3 147.5 328.4 147.6 324.5 147.7 327.3 147.8 324.3 147.9 321.0 148.0 328.7 148.1 323.5 148.2 328.4 148.3 323.5 148.4 325.5 148.5 324.0 148.6 330.1 148.7 325.1 148.8 330.2 148.9 327.0 149.0 325.4 149.1 322.4 149.2 328.3 149.3 329.0 149.4 317.8 149.5 326.6 149.6 323.3 149.7 326.7 149.8 324.4 149.9 323.5 150.0 321.5 150.1 325.6 150.2 327.3 150.3 321.7 150.4 320.9 150.5 323.3 150.6 321.3 150.7 322.1 150.8 318.9 150.9 327.0 151.0 324.0 151.1 324.2 151.2 335.0 151.3 326.0 151.4 325.8 151.5 327.5 151.6 320.9 151.7 322.6 151.8 325.5 151.9 329.9 152.0 324.4 152.1 325.7 152.2 321.4 152.3 324.2 152.4 325.8 152.5 322.2 152.6 321.8 152.7 316.6 152.8 332.5 152.9 327.4 153.0 325.0 153.1 327.1 153.2 319.9 153.3 325.6 153.4 328.5 153.5 326.7 153.6 328.0 153.7 329.2 153.8 325.8 153.9 325.4 154.0 326.6 154.1 334.6 154.2 324.5 154.3 321.7 154.4 322.6 154.5 328.6 154.6 325.6 154.7 322.9 154.8 318.7 154.9 327.8 155.0 327.5 155.1 325.7 155.2 328.1 155.3 330.5 155.4 328.5 155.5 323.9 155.6 324.2 155.7 325.4 155.8 321.0 155.9 326.4 156.0 320.7 156.1 322.6 156.2 331.0 156.3 326.8 156.4 325.4 156.5 323.6 156.6 323.1 156.7 324.8 156.8 327.8 156.9 322.0 157.0 323.7 157.1 323.9 157.2 326.4 157.3 327.4 157.4 324.9 157.5 327.9 157.6 322.1 157.7 329.3 157.8 318.8 157.9 332.1 158.0 321.9 158.1 322.7 158.2 321.0 158.3 325.1 158.4 319.3 158.5 322.4 158.6 325.7 158.7 327.1 158.8 324.4 158.9 324.7 159.0 327.1 159.1 331.9 159.2 332.1 159.3 325.2 159.4 320.9 159.5 323.9 159.6 322.3 159.7 326.4 159.8 323.4 159.9 323.9 160.0 324.5 160.1 328.7 160.2 326.5 160.3 320.1 160.4 322.2 160.5 324.2 160.6 326.4 160.7 328.5 160.8 324.8 160.9 327.2 161.0 323.3 161.1 320.9 161.2 322.0 161.3 324.0 161.4 324.0 161.5 321.5 161.6 328.0 161.7 321.0 161.8 320.1 161.9 327.9 162.0 323.8 162.1 327.6 162.2 319.4 162.3 320.2 162.4 328.0 162.5 325.6 162.6 331.0 162.7 333.8 162.8 334.7 162.9 318.6 163.0 318.8 163.1 328.2 163.2 329.2 163.3 327.6 163.4 318.4 163.5 327.9 163.6 328.6 163.7 319.0 163.8 323.1 163.9 323.8 164.0 325.8 164.1 317.0 164.2 329.8 164.3 328.4 164.4 317.7 164.5 325.7 164.6 324.0 164.7 324.5 164.8 323.5 164.9 321.6 165.0 320.4 165.1 333.0 165.2 322.5 165.3 326.3 165.4 325.6 165.5 326.0 165.6 326.2 165.7 327.9 165.8 318.9 165.9 320.5 166.0 324.7 166.1 326.5 166.2 322.4 166.3 324.1 166.4 322.4 166.5 331.9 166.6 317.7 166.7 322.2 166.8 328.9 166.9 326.1 167.0 325.2 167.1 328.2 167.2 324.4 167.3 322.7 167.4 327.7 167.5 322.4 167.6 328.6 167.7 326.8 167.8 327.7 167.9 322.2 168.0 330.7 168.1 324.8 168.2 329.9 168.3 329.0 168.4 321.3 168.5 326.4 168.6 320.3 168.7 321.8 168.8 325.3 168.9 318.1 169.0 322.7 169.1 319.3 169.2 324.2 169.3 326.2 169.4 326.0 169.5 321.6 169.6 326.1 169.7 324.8 169.8 320.3 169.9 316.8 170.0 319.5 170.1 322.4 170.2 319.8 170.3 327.2 170.4 322.5 170.5 320.9 170.6 320.9 170.7 324.8 170.8 319.0 170.9 321.5 171.0 322.3 171.1 322.4 171.2 327.9 171.3 327.2 171.4 322.7 171.5 323.8 171.6 326.6 171.7 320.2 171.8 326.4 171.9 321.4 172.0 325.3 172.1 321.4 172.2 332.1 172.3 323.3 172.4 323.3 172.5 323.6 172.6 326.0 172.7 319.4 172.8 324.3 172.9 319.4 173.0 328.0 173.1 323.2 173.2 324.3 173.3 326.8 173.4 319.6 173.5 322.8 173.6 330.7 173.7 323.2 173.8 325.3 173.9 326.0 174.0 327.6 174.1 329.2 174.2 323.3 174.3 332.5 174.4 327.2 174.5 330.0 174.6 325.3 174.7 324.8 174.8 321.9 174.9 330.4 175.0 329.1 175.1 328.7 175.2 322.6 175.3 324.5 175.4 327.1 175.5 325.4 175.6 322.4 175.7 331.7 175.8 326.1 175.9 319.2 176.0 327.1 176.1 322.7 176.2 327.7 176.3 320.4 176.4 326.4 176.5 323.3 176.6 321.1 176.7 325.2 176.8 322.3 176.9 325.5 177.0 319.7 177.1 319.8 177.2 322.4 177.3 328.7 177.4 323.1 177.5 325.1 177.6 325.4 177.7 325.8 177.8 323.2 177.9 328.2 178.0 331.6 178.1 327.5 178.2 322.1 178.3 322.9 178.4 316.6 178.5 327.5 178.6 327.8 178.7 320.9 178.8 327.0 178.9 319.8 179.0 324.1 179.1 327.4 179.2 329.8 179.3 324.3 179.4 326.0 179.5 324.9 179.6 322.6 179.7 322.3 179.8 318.9 179.9 322.6 180.0 323.4 180.1 313.7 180.2 327.2 180.3 327.7 180.4 319.2 180.5 326.4 180.6 325.5 180.7 316.1 180.8 325.9 180.9 326.1 181.0 325.5 181.1 329.5 181.2 319.4 181.3 321.0 181.4 332.1 181.5 328.3 181.6 328.2 181.7 320.3 181.8 320.2 181.9 322.0 182.0 326.3 182.1 323.6 182.2 326.2 182.3 324.1 182.4 328.7 182.5 322.9 182.6 328.2 182.7 321.1 182.8 324.4 182.9 325.4 183.0 324.8 183.1 323.4 183.2 321.4 183.3 321.7 183.4 325.0 183.5 318.5 183.6 328.1 183.7 323.5 183.8 324.3 183.9 321.0 184.0 323.7 184.1 323.8 184.2 323.6 184.3 328.4 184.4 329.2 184.5 325.2 184.6 322.5 184.7 326.6 184.8 319.8 184.9 320.1 185.0 321.7 185.1 321.6 185.2 324.7 185.3 326.0 185.4 329.0 185.5 325.2 185.6 322.1 185.7 317.4 185.8 322.4 185.9 319.0 186.0 328.6 186.1 322.3 186.2 327.3 186.3 325.0 186.4 326.8 186.5 324.9 186.6 325.3 186.7 330.2 186.8 317.8 186.9 328.1 187.0 320.0 187.1 327.7 187.2 325.9 187.3 322.4 187.4 323.2 187.5 331.5 187.6 326.3 187.7 323.2 187.8 326.0 187.9 323.9 188.0 320.2 188.1 322.6 188.2 316.6 188.3 318.4 188.4 318.2 188.5 319.1 188.6 319.3 188.7 321.5 188.8 323.3 188.9 324.5 189.0 323.1 189.1 326.5 189.2 321.4 189.3 326.7 189.4 320.4 189.5 322.8 189.6 322.7 189.7 330.2 189.8 320.3 189.9 320.6 190.0 324.6 190.1 329.6 190.2 316.9 190.3 320.3 190.4 326.8 190.5 318.0 190.6 324.4 190.7 327.4 190.8 323.5 190.9 326.1 191.0 327.0 191.1 322.1 191.2 326.0 191.3 328.0 191.4 324.3 191.5 323.1 191.6 329.4 191.7 321.1 191.8 320.2 191.9 318.8 192.0 325.4 192.1 325.5 192.2 322.6 192.3 325.0 192.4 319.2 192.5 321.2 192.6 327.7 192.7 319.3 192.8 325.2 192.9 327.1 193.0 325.5 193.1 326.5 193.2 324.2 193.3 326.3 193.4 320.7 193.5 322.7 193.6 332.3 193.7 320.2 193.8 321.2 193.9 326.5 194.0 321.7 194.1 319.3 194.2 321.8 194.3 322.5 194.4 323.5 194.5 324.6 194.6 323.8 194.7 327.3 194.8 328.2 194.9 321.7 195.0 323.0 195.1 319.2 195.2 325.3 195.3 327.4 195.4 325.0 195.5 327.4 195.6 325.3 195.7 326.7 195.8 328.4 195.9 321.8 196.0 324.2 196.1 322.5 196.2 317.1 196.3 322.8 196.4 314.9 196.5 321.6 196.6 325.1 196.7 327.0 196.8 321.1 196.9 321.6 197.0 317.6 197.1 327.6 197.2 328.8 197.3 324.7 197.4 322.1 197.5 321.0 197.6 326.1 197.7 325.2 197.8 322.4 197.9 324.6 198.0 324.7 198.1 323.7 198.2 326.3 198.3 324.3 198.4 324.8 198.5 322.0 198.6 319.0 198.7 322.5 198.8 325.5 198.9 327.5 199.0 321.0 199.1 323.9 199.2 329.7 199.3 324.3 199.4 318.8 199.5 324.5 199.6 320.8 199.7 322.1 199.8 318.6 199.9 324.0 200.0 328.9 200.1 322.3 200.2 321.0 200.3 323.1 200.4 321.5 200.5 323.1 200.6 325.0 200.7 324.6 200.8 323.2 200.9 328.3 201.0 325.4 201.1 324.6 201.2 323.6 201.3 320.4 201.4 322.0 201.5 321.6 201.6 325.6 201.7 319.2 201.8 331.0 201.9 324.9 202.0 323.0 202.1 320.1 202.2 320.5 202.3 327.4 202.4 326.1 202.5 320.9 202.6 317.5 202.7 324.0 202.8 324.9 202.9 322.7 203.0 326.7 203.1 328.5 203.2 321.7 203.3 324.7 203.4 321.2 203.5 323.8 203.6 325.2 203.7 323.6 203.8 324.6 203.9 327.9 204.0 319.8 204.1 330.5 204.2 324.8 204.3 324.1 204.4 326.6 204.5 325.1 204.6 322.2 204.7 320.2 204.8 319.8 204.9 321.0 205.0 323.9 205.1 326.6 205.2 317.5 205.3 320.5 205.4 320.0 205.5 322.7 205.6 322.5 205.7 325.5 205.8 323.7 205.9 330.9 206.0 313.7 206.1 319.8 206.2 327.0 206.3 318.6 206.4 316.5 206.5 317.8 206.6 322.9 206.7 317.5 206.8 326.0 206.9 317.2 207.0 320.0 207.1 319.9 207.2 325.8 207.3 325.5 207.4 328.5 207.5 313.4 207.6 320.9 207.7 324.7 207.8 325.6 207.9 323.3 208.0 330.9 208.1 322.6 208.2 321.8 208.3 319.9 208.4 327.8 208.5 319.5 208.6 320.4 208.7 319.2 208.8 324.8 208.9 320.9 209.0 321.1 209.1 323.6 209.2 323.1 209.3 319.3 209.4 320.7 209.5 326.3 209.6 315.8 209.7 323.6 209.8 321.6 209.9 326.9 210.0 324.7 210.1 319.9 210.2 325.0 210.3 321.9 210.4 328.6 210.5 324.2 210.6 320.9 210.7 328.6 210.8 320.3 210.9 319.6 211.0 320.7 211.1 324.4 211.2 323.7 211.3 324.4 211.4 328.5 211.5 325.0 211.6 324.8 211.7 321.9 211.8 330.1 211.9 321.4 212.0 325.3 212.1 320.7 212.2 320.9 212.3 333.5 212.4 327.8 212.5 325.1 212.6 320.5 212.7 320.8 212.8 320.3 212.9 322.7 213.0 326.4 213.1 327.0 213.2 322.2 213.3 321.3 213.4 330.1 213.5 326.0 213.6 315.1 213.7 321.6 213.8 324.8 213.9 328.2 214.0 320.4 214.1 326.7 214.2 320.4 214.3 317.2 214.4 321.7 214.5 319.3 214.6 324.7 214.7 322.6 214.8 322.3 214.9 325.7 215.0 318.0 215.1 322.9 215.2 322.6 215.3 326.6 215.4 328.5 215.5 325.3 215.6 320.1 215.7 318.3 215.8 326.7 215.9 326.5 216.0 323.7 216.1 328.1 216.2 319.6 216.3 319.2 216.4 322.7 216.5 327.6 216.6 319.8 216.7 324.0 216.8 315.2 216.9 321.3 217.0 324.2 217.1 323.4 217.2 322.9 217.3 326.1 217.4 324.6 217.5 317.2 217.6 325.1 217.7 320.1 217.8 320.7 217.9 320.0 218.0 320.8 218.1 325.8 218.2 318.7 218.3 321.9 218.4 318.8 218.5 319.6 218.6 320.2 218.7 318.2 218.8 321.4 218.9 329.0 219.0 323.9 219.1 324.9 219.2 323.9 219.3 324.7 219.4 326.1 219.5 327.3 219.6 322.7 219.7 318.7 219.8 319.9 219.9 327.5 220.0 328.1 220.1 325.8 220.2 323.3 220.3 321.7 220.4 321.6 220.5 323.4 220.6 323.4 220.7 322.7 220.8 320.6 220.9 321.2 221.0 321.1 221.1 322.7 221.2 317.4 221.3 317.6 221.4 321.0 221.5 321.7 221.6 323.7 221.7 320.2 221.8 324.1 221.9 319.0 222.0 318.6 222.1 320.9 222.2 323.8 222.3 325.1 222.4 325.9 222.5 325.8 222.6 328.9 222.7 316.0 222.8 321.1 222.9 321.7 223.0 328.7 223.1 322.7 223.2 325.3 223.3 315.0 223.4 319.8 223.5 319.8 223.6 319.2 223.7 320.6 223.8 322.2 223.9 323.2 224.0 320.0 224.1 323.1 224.2 320.6 224.3 325.9 224.4 318.9 224.5 326.7 224.6 323.7 224.7 326.2 224.8 319.1 224.9 318.9 225.0 325.7 225.1 325.3 225.2 320.5 225.3 324.3 225.4 320.6 225.5 326.4 225.6 321.0 225.7 319.6 225.8 319.8 225.9 324.5 226.0 323.8 226.1 321.2 226.2 324.2 226.3 319.5 226.4 320.9 226.5 322.5 226.6 321.4 226.7 319.5 226.8 326.3 226.9 320.0 227.0 324.9 227.1 322.8 227.2 320.3 227.3 317.4 227.4 326.6 227.5 316.8 227.6 321.2 227.7 317.3 227.8 328.9 227.9 322.9 228.0 320.1 228.1 318.6 228.2 318.9 228.3 325.6 228.4 321.0 228.5 318.8 228.6 318.7 228.7 323.1 228.8 319.5 228.9 327.2 229.0 325.9 229.1 324.6 229.2 325.1 229.3 323.5 229.4 315.5 229.5 324.2 229.6 325.8 229.7 325.5 229.8 324.1 229.9 318.7 230.0 328.5 230.1 323.1 230.2 325.7 230.3 321.7 230.4 322.4 230.5 317.7 230.6 319.8 230.7 320.7 230.8 317.5 230.9 317.3 231.0 320.1 231.1 320.7 231.2 325.9 231.3 321.8 231.4 321.4 231.5 324.1 231.6 324.7 231.7 326.3 231.8 323.6 231.9 321.9 232.0 317.0 232.1 322.3 232.2 319.8 232.3 320.7 232.4 324.3 232.5 322.6 232.6 326.2 232.7 322.0 232.8 318.5 232.9 324.4 233.0 321.9 233.1 327.5 233.2 315.9 233.3 322.0 233.4 321.5 233.5 324.1 233.6 320.7 233.7 321.0 233.8 319.5 233.9 315.4 234.0 318.8 234.1 325.9 234.2 324.8 234.3 328.0 234.4 323.1 234.5 316.9 234.6 327.5 234.7 324.9 234.8 323.1 234.9 325.0 235.0 319.2 235.1 326.1 235.2 324.5 235.3 318.9 235.4 323.7 235.5 323.6 235.6 322.6 235.7 322.0 235.8 321.9 235.9 331.1 236.0 323.9 236.1 317.5 236.2 320.2 236.3 323.3 236.4 318.7 236.5 324.5 236.6 326.1 236.7 323.4 236.8 325.6 236.9 321.8 237.0 316.0 237.1 322.9 237.2 313.6 237.3 322.4 237.4 322.6 237.5 318.5 237.6 320.6 237.7 323.2 237.8 324.5 237.9 320.3 238.0 321.8 238.1 319.3 238.2 323.6 238.3 326.0 238.4 320.6 238.5 316.7 238.6 317.3 238.7 325.4 238.8 327.3 238.9 316.5 239.0 327.6 239.1 320.1 239.2 320.4 239.3 321.3 239.4 326.6 239.5 320.1 239.6 320.2 239.7 323.9 239.8 322.6 239.9 323.2 240.0 322.6 240.1 330.2 240.2 326.5 240.3 330.6 240.4 313.9 240.5 315.5 240.6 329.8 240.7 325.6 240.8 325.5 240.9 318.3 241.0 324.8 241.1 324.7 241.2 318.1 241.3 324.6 241.4 323.8 241.5 316.7 241.6 316.4 241.7 327.3 241.8 319.5 241.9 322.1 242.0 324.5 242.1 321.5 242.2 323.0 242.3 317.6 242.4 322.9 242.5 316.7 242.6 318.0 242.7 324.6 242.8 318.8 242.9 324.8 243.0 321.7 243.1 322.6 243.2 317.7 243.3 323.4 243.4 323.1 243.5 320.2 243.6 320.7 243.7 321.4 243.8 323.9 243.9 321.6 244.0 323.6 244.1 325.2 244.2 331.2 244.3 322.5 244.4 317.8 244.5 322.0 244.6 324.4 244.7 314.1 244.8 316.0 244.9 323.5 245.0 322.0 245.1 318.9 245.2 320.1 245.3 321.2 245.4 319.9 245.5 322.8 245.6 315.5 245.7 321.0 245.8 325.6 245.9 320.1 246.0 321.5 246.1 317.7 246.2 320.8 246.3 324.0 246.4 321.7 246.5 327.0 246.6 321.2 246.7 316.9 246.8 323.4 246.9 318.4 247.0 325.0 247.1 324.3 247.2 318.8 247.3 315.8 247.4 323.2 247.5 318.9 247.6 319.4 247.7 321.4 247.8 317.5 247.9 320.9 248.0 325.2 248.1 320.6 248.2 322.9 248.3 321.2 248.4 313.5 248.5 318.8 248.6 324.0 248.7 321.6 248.8 315.3 248.9 317.6 249.0 319.9 249.1 320.6 249.2 325.4 249.3 320.1 249.4 320.7 249.5 322.0 249.6 322.6 249.7 326.4 249.8 325.6 249.9 320.4 250.0 323.5 250.1 315.4 250.2 319.7 250.3 322.0 250.4 316.8 250.5 326.4 250.6 324.6 250.7 324.6 250.8 323.4 250.9 324.0 251.0 321.3 251.1 322.0 251.2 317.9 251.3 325.2 251.4 321.1 251.5 318.9 251.6 319.6 251.7 325.8 251.8 320.8 251.9 322.5 252.0 321.4 252.1 325.1 252.2 320.0 252.3 321.3 252.4 311.3 252.5 318.7 252.6 314.8 252.7 325.2 252.8 320.9 252.9 320.6 253.0 322.1 253.1 323.6 253.2 318.7 253.3 310.1 253.4 317.5 253.5 323.0 253.6 326.9 253.7 324.4 253.8 328.1 253.9 321.2 254.0 314.6 254.1 320.1 254.2 319.1 254.3 324.1 254.4 327.0 254.5 323.7 254.6 319.5 254.7 320.9 254.8 310.1 254.9 325.1 255.0 318.4 255.1 326.0 255.2 321.7 255.3 320.6 255.4 324.9 255.5 318.7 255.6 317.7 255.7 323.2 255.8 318.4 255.9 321.9 256.0 318.1 256.1 315.6 256.2 323.1 256.3 319.1 256.4 320.8 256.5 316.4 256.6 325.0 256.7 317.6 256.8 327.3 256.9 317.4 257.0 317.0 257.1 321.8 257.2 319.4 257.3 322.6 257.4 322.2 257.5 322.2 257.6 322.5 257.7 323.8 257.8 321.1 257.9 322.1 258.0 323.3 258.1 317.0 258.2 324.3 258.3 316.7 258.4 316.3 258.5 319.9 258.6 322.8 258.7 320.3 258.8 329.5 258.9 317.8 259.0 320.2 259.1 319.0 259.2 316.1 259.3 324.6 259.4 326.3 259.5 322.4 259.6 324.6 259.7 315.6 259.8 318.6 259.9 326.6 260.0 326.1 260.1 321.0 260.2 322.1 260.3 320.3 260.4 321.7 260.5 319.1 260.6 323.4 260.7 322.4 260.8 317.2 260.9 322.9 261.0 322.8 261.1 322.9 261.2 322.5 261.3 317.2 261.4 320.0 261.5 324.6 261.6 321.3 261.7 323.1 261.8 317.9 261.9 318.2 262.0 322.6 262.1 321.5 262.2 319.6 262.3 324.4 262.4 324.4 262.5 322.5 262.6 323.0 262.7 322.8 262.8 320.3 262.9 322.0 263.0 317.8 263.1 320.9 263.2 320.7 263.3 321.2 263.4 320.2 263.5 325.1 263.6 328.7 263.7 315.2 263.8 325.1 263.9 323.5 264.0 321.7 264.1 327.1 264.2 324.6 264.3 321.4 264.4 328.6 264.5 319.3 264.6 324.6 264.7 314.4 264.8 320.2 264.9 324.1 265.0 315.6 265.1 324.8 265.2 319.9 265.3 316.2 265.4 325.9 265.5 319.5 265.6 325.2 265.7 317.5 265.8 324.6 265.9 321.4 266.0 322.0 266.1 322.3 266.2 318.0 266.3 319.0 266.4 318.6 266.5 324.5 266.6 329.4 266.7 320.1 266.8 317.1 266.9 323.7 267.0 322.7 267.1 324.4 267.2 315.3 267.3 317.7 267.4 318.6 267.5 325.1 267.6 323.1 267.7 316.6 267.8 323.2 267.9 322.3 268.0 323.3 268.1 323.3 268.2 323.4 268.3 324.9 268.4 323.0 268.5 319.5 268.6 317.1 268.7 318.4 268.8 322.3 268.9 313.8 269.0 325.5 269.1 318.0 269.2 318.6 269.3 326.3 269.4 322.2 269.5 319.4 269.6 319.0 269.7 318.4 269.8 313.3 269.9 321.5 270.0 323.4 270.1 313.9 270.2 315.7 270.3 321.1 270.4 322.9 270.5 322.7 270.6 322.0 270.7 316.8 270.8 314.6 270.9 318.5 271.0 317.9 271.1 313.7 271.2 316.5 271.3 315.6 271.4 320.5 271.5 319.9 271.6 320.8 271.7 321.9 271.8 322.8 271.9 321.3 272.0 326.7 272.1 327.3 272.2 320.0 272.3 320.4 272.4 323.3 272.5 328.0 272.6 323.2 272.7 314.2 272.8 323.4 272.9 320.0 273.0 315.2 273.1 326.8 273.2 321.4 273.3 323.0 273.4 323.5 273.5 319.6 273.6 328.0 273.7 319.1 273.8 321.3 273.9 317.2 274.0 323.2 274.1 321.9 274.2 317.0 274.3 319.2 274.4 325.9 274.5 316.5 274.6 319.9 274.7 323.8 274.8 318.9 274.9 317.1 275.0 321.2 275.1 315.1 275.2 315.3 275.3 319.1 275.4 323.3 275.5 317.6 275.6 324.6 275.7 326.7 275.8 326.5 275.9 320.6 276.0 317.0 276.1 321.3 276.2 320.4 276.3 318.9 276.4 325.9 276.5 317.5 276.6 323.5 276.7 323.2 276.8 325.2 276.9 323.0 277.0 324.0 277.1 321.3 277.2 317.1 277.3 324.8 277.4 316.8 277.5 321.6 277.6 318.6 277.7 323.3 277.8 319.1 277.9 317.9 278.0 326.2 278.1 326.6 278.2 320.2 278.3 321.3 278.4 318.4 278.5 320.1 278.6 321.7 278.7 322.1 278.8 316.4 278.9 317.4 279.0 319.2 279.1 325.1 279.2 322.7 279.3 323.5 279.4 318.3 279.5 319.3 279.6 319.7 279.7 324.1 279.8 326.3 279.9 318.4 280.0 325.4 280.1 314.9 280.2 318.5 280.3 324.7 280.4 324.3 280.5 313.9 280.6 321.6 280.7 319.8 280.8 320.2 280.9 317.2 281.0 320.5 281.1 318.6 281.2 322.2 281.3 327.2 281.4 319.4 281.5 321.6 281.6 319.3 281.7 323.5 281.8 318.4 281.9 322.4 282.0 319.1 282.1 318.3 282.2 317.9 282.3 316.5 282.4 321.2 282.5 330.4 282.6 320.0 282.7 325.8 282.8 321.7 282.9 318.5 283.0 319.5 283.1 324.7 283.2 318.7 283.3 322.1 283.4 324.3 283.5 320.8 283.6 321.5 283.7 317.8 283.8 319.4 283.9 319.8 284.0 319.8 284.1 325.5 284.2 322.5 284.3 322.7 284.4 320.3 284.5 316.4 284.6 323.7 284.7 323.8 284.8 324.1 284.9 317.9 285.0 325.3 285.1 322.1 285.2 324.2 285.3 316.5 285.4 324.6 285.5 321.6 285.6 320.5 285.7 319.4 285.8 320.0 285.9 318.7 286.0 325.1 286.1 322.0 286.2 326.3 286.3 321.5 286.4 318.4 286.5 321.1 286.6 322.5 286.7 321.3 286.8 317.2 286.9 318.3 287.0 322.1 287.1 319.9 287.2 318.3 287.3 319.1 287.4 319.6 287.5 323.3 287.6 320.7 287.7 316.2 287.8 316.1 287.9 321.7 288.0 320.0 288.1 316.4 288.2 323.9 288.3 324.3 288.4 323.4 288.5 317.3 288.6 323.1 288.7 325.1 288.8 327.7 288.9 318.8 289.0 323.0 289.1 326.6 289.2 320.2 289.3 321.9 289.4 323.0 289.5 317.2 289.6 322.7 289.7 330.3 289.8 325.0 289.9 313.9 290.0 319.5 290.1 320.2 290.2 311.3 290.3 320.3 290.4 317.9 290.5 321.8 290.6 327.5 290.7 322.2 290.8 320.5 290.9 319.3 291.0 324.6 291.1 330.8 291.2 314.2 291.3 322.6 291.4 328.7 291.5 322.2 291.6 321.6 291.7 319.1 291.8 318.5 291.9 325.2 292.0 315.8 292.1 325.9 292.2 320.0 292.3 322.1 292.4 322.1 292.5 320.8 292.6 324.6 292.7 322.3 292.8 319.6 292.9 324.6 293.0 331.0 293.1 326.6 293.2 317.7 293.3 319.1 293.4 318.1 293.5 322.6 293.6 320.3 293.7 320.0 293.8 327.7 293.9 323.9 294.0 324.6 294.1 326.8 294.2 317.6 294.3 315.2 294.4 324.2 294.5 320.7 294.6 321.9 294.7 318.1 294.8 322.1 294.9 326.8 295.0 317.9 295.1 320.7 295.2 314.9 295.3 320.2 295.4 322.0 295.5 320.0 295.6 321.2 295.7 324.6 295.8 319.9 295.9 321.7 296.0 320.4 296.1 319.2 296.2 320.7 296.3 320.6 296.4 326.3 296.5 319.8 296.6 327.7 296.7 318.8 296.8 313.1 296.9 323.5 297.0 314.0 297.1 318.0 297.2 324.4 297.3 320.3 297.4 317.5 297.5 315.5 297.6 322.7 297.7 322.7 297.8 317.2 297.9 321.2 298.0 320.4 298.1 321.4 298.2 327.2 298.3 323.5 298.4 326.1 298.5 331.9 298.6 317.0 298.7 320.1 298.8 327.4 298.9 323.5 299.0 320.0 299.1 318.6 299.2 321.4 299.3 321.6 299.4 324.0 299.5 318.8 299.6 328.3 299.7 322.5 299.8 320.4 299.9 319.0 300.0 323.0 300.1 319.6 300.2 318.9 300.3 320.3 300.4 324.3 300.5 319.0 300.6 324.5 300.7 326.6 300.8 317.1 300.9 330.4 301.0 324.9 301.1 315.5 301.2 318.9 301.3 320.2 301.4 314.0 301.5 317.7 301.6 328.4 301.7 323.2 301.8 317.3 301.9 322.0 302.0 329.0 302.1 316.5 302.2 314.9 302.3 328.6 302.4 317.2 302.5 317.1 302.6 320.1 302.7 314.6 302.8 323.3 302.9 324.2 303.0 318.1 303.1 319.2 303.2 320.8 303.3 323.9 303.4 316.7 303.5 324.4 303.6 321.8 303.7 322.8 303.8 316.1 303.9 319.4 304.0 323.6 304.1 323.2 304.2 316.6 304.3 324.1 304.4 324.3 304.5 320.7 304.6 318.4 304.7 319.8 304.8 317.1 304.9 316.8 305.0 320.0 305.1 318.1 305.2 316.1 305.3 319.6 305.4 314.7 305.5 322.7 305.6 314.5 305.7 325.3 305.8 317.5 305.9 322.0 306.0 325.2 306.1 320.2 306.2 319.7 306.3 319.8 306.4 318.5 306.5 324.2 306.6 320.5 306.7 316.5 306.8 321.7 306.9 315.5 307.0 329.2 307.1 318.3 307.2 314.5 307.3 318.9 307.4 324.9 307.5 319.7 307.6 320.8 307.7 320.8 307.8 321.3 307.9 319.6 308.0 323.4 308.1 327.6 308.2 320.0 308.3 325.2 308.4 321.9 308.5 314.4 308.6 318.4 308.7 324.0 308.8 315.2 308.9 318.7 309.0 316.4 309.1 319.0 309.2 321.0 309.3 321.8 309.4 318.7 309.5 328.3 309.6 322.5 309.7 317.1 309.8 320.1 309.9 321.6 310.0 324.1 310.1 321.9 310.2 316.7 310.3 326.1 310.4 314.7 310.5 324.1 310.6 317.3 310.7 319.9 310.8 318.8 310.9 315.3 311.0 317.2 311.1 320.7 311.2 324.5 311.3 318.9 311.4 323.9 311.5 323.8 311.6 314.4 311.7 318.3 311.8 319.1 311.9 317.4 312.0 320.7 312.1 317.7 312.2 316.1 312.3 318.6 312.4 315.4 312.5 319.5 312.6 320.3 312.7 321.5 312.8 318.5 312.9 320.8 313.0 317.9 313.1 322.0 313.2 324.7 313.3 328.8 313.4 324.2 313.5 322.7 313.6 321.4 313.7 324.5 313.8 329.8 313.9 322.1 314.0 320.9 314.1 321.7 314.2 319.0 314.3 324.9 314.4 321.3 314.5 321.8 314.6 318.1 314.7 319.6 314.8 321.4 314.9 312.4 315.0 321.5 315.1 321.7 315.2 320.7 315.3 317.4 315.4 322.2 315.5 325.6 315.6 329.7 315.7 324.4 315.8 324.0 315.9 323.0 316.0 321.7 316.1 315.7 316.2 323.8 316.3 320.6 316.4 317.5 316.5 325.1 316.6 320.6 316.7 322.0 316.8 318.7 316.9 315.7 317.0 316.4 317.1 318.7 317.2 325.7 317.3 322.2 317.4 314.5 317.5 322.4 317.6 319.0 317.7 321.2 317.8 323.1 317.9 320.6 318.0 325.9 318.1 323.0 318.2 315.9 318.3 318.0 318.4 322.6 318.5 321.5 318.6 322.3 318.7 320.2 318.8 321.6 318.9 326.8 319.0 323.0 319.1 323.7 319.2 323.3 319.3 324.0 319.4 327.5 319.5 327.2 319.6 323.9 319.7 321.4 319.8 318.0 319.9 325.5 320.0 312.1 320.1 321.5 320.2 321.6 320.3 327.7 320.4 319.6 320.5 319.9 320.6 315.3 320.7 315.6 320.8 320.8 320.9 320.0 321.0 323.9 321.1 315.6 321.2 321.6 321.3 319.6 321.4 314.3 321.5 312.3 321.6 321.8 321.7 321.3 321.8 322.4 321.9 318.3 322.0 317.3 322.1 323.5 322.2 327.2 322.3 321.9 322.4 313.1 322.5 322.6 322.6 327.5 322.7 322.6 322.8 320.1 322.9 323.1 323.0 330.3 323.1 316.9 323.2 324.1 323.3 319.7 323.4 328.8 323.5 322.2 323.6 318.2 323.7 321.3 323.8 324.9 323.9 313.4 324.0 327.0 324.1 326.5 324.2 321.5 324.3 315.8 324.4 321.7 324.5 322.9 324.6 319.7 324.7 323.4 324.8 319.7 324.9 319.0 325.0 321.3 325.1 319.4 325.2 317.0 325.3 323.0 325.4 320.0 325.5 325.1 325.6 326.4 325.7 326.2 325.8 316.6 325.9 319.0 326.0 318.6 326.1 317.8 326.2 325.4 326.3 323.9 326.4 323.2 326.5 320.1 326.6 320.6 326.7 319.8 326.8 318.6 326.9 313.6 327.0 318.8 327.1 317.9 327.2 318.0 327.3 320.7 327.4 322.1 327.5 314.8 327.6 322.5 327.7 317.4 327.8 323.3 327.9 320.6 328.0 320.4 328.1 321.4 328.2 321.2 328.3 325.3 328.4 324.9 328.5 319.1 328.6 323.5 328.7 321.0 328.8 321.2 328.9 320.2 329.0 320.2 329.1 322.1 329.2 316.0 329.3 321.0 329.4 321.4 329.5 323.4 329.6 323.9 329.7 329.0 329.8 321.6 329.9 325.3 330.0 319.0 330.1 323.3 330.2 323.1 330.3 326.8 330.4 316.6 330.5 319.9 330.6 319.6 330.7 322.0 330.8 322.9 330.9 322.4 331.0 320.2 331.1 316.8 331.2 316.7 331.3 314.5 331.4 314.8 331.5 322.9 331.6 324.0 331.7 321.6 331.8 320.2 331.9 321.5 332.0 322.8 332.1 320.6 332.2 327.4 332.3 326.9 332.4 319.9 332.5 326.2 332.6 318.8 332.7 320.5 332.8 319.2 332.9 322.8 333.0 326.0 333.1 321.1 333.2 319.6 333.3 322.7 333.4 315.4 333.5 327.4 333.6 319.3 333.7 318.9 333.8 320.0 333.9 319.3 334.0 322.6 334.1 318.9 334.2 320.0 334.3 313.6 334.4 322.6 334.5 324.8 334.6 322.4 334.7 320.9 334.8 323.5 334.9 314.8 335.0 319.3 335.1 319.2 335.2 322.4 335.3 318.6 335.4 319.6 335.5 326.5 335.6 319.6 335.7 319.3 335.8 324.7 335.9 317.3 336.0 317.9 336.1 322.3 336.2 319.9 336.3 314.1 336.4 319.1 336.5 319.6 336.6 320.7 336.7 320.9 336.8 324.3 336.9 318.7 337.0 314.6 337.1 322.1 337.2 320.1 337.3 322.7 337.4 318.9 337.5 323.3 337.6 320.3 337.7 319.2 337.8 317.6 337.9 319.8 338.0 321.7 338.1 324.6 338.2 318.0 338.3 318.0 338.4 318.6 338.5 317.8 338.6 322.5 338.7 320.6 338.8 321.8 338.9 315.3 339.0 321.8 339.1 324.7 339.2 313.9 339.3 322.1 339.4 328.9 339.5 323.3 339.6 328.0 339.7 322.8 339.8 319.5 339.9 323.6 340.0 319.1 340.1 326.1 340.2 317.9 340.3 323.6 340.4 319.3 340.5 316.7 340.6 318.8 340.7 323.3 340.8 320.0 340.9 318.2 341.0 323.5 341.1 317.0 341.2 320.0 341.3 318.4 341.4 322.8 341.5 317.9 341.6 325.2 341.7 328.0 341.8 320.8 341.9 319.3 342.0 317.0 342.1 327.0 342.2 317.2 342.3 321.2 342.4 320.3 342.5 320.6 342.6 326.1 342.7 318.6 342.8 318.7 342.9 316.4 343.0 320.4 343.1 324.3 343.2 319.1 343.3 324.9 343.4 318.3 343.5 320.4 343.6 321.5 343.7 314.4 343.8 321.3 343.9 316.6 344.0 322.5 344.1 320.5 344.2 321.5 344.3 322.6 344.4 322.9 344.5 326.7 344.6 324.3 344.7 321.3 344.8 323.1 344.9 317.3 345.0 320.4 345.1 322.5 345.2 315.3 345.3 323.8 345.4 324.6 345.5 318.5 345.6 324.1 345.7 317.3 345.8 320.9 345.9 315.7 346.0 323.3 346.1 320.7 346.2 318.4 346.3 317.9 346.4 325.5 346.5 317.1 346.6 323.5 346.7 326.5 346.8 315.7 346.9 317.2 347.0 319.9 347.1 324.7 347.2 317.7 347.3 322.8 347.4 322.6 347.5 318.8 347.6 326.1 347.7 320.2 347.8 317.9 347.9 320.5 348.0 321.1 348.1 318.2 348.2 318.9 348.3 320.0 348.4 316.4 348.5 319.3 348.6 317.7 348.7 322.9 348.8 320.8 348.9 317.0 349.0 323.8 349.1 322.7 349.2 316.0 349.3 327.8 349.4 322.8 349.5 311.7 349.6 322.5 349.7 317.5 349.8 323.6 349.9 326.4 350.0 316.4 350.1 316.9 350.2 322.4 350.3 321.3 350.4 316.6 350.5 318.1 350.6 323.5 350.7 313.9 350.8 319.2 350.9 317.3 351.0 318.9 351.1 317.2 351.2 322.1 351.3 316.1 351.4 314.4 351.5 324.0 351.6 323.7 351.7 325.0 351.8 315.7 351.9 321.3 352.0 318.4 352.1 322.9 352.2 321.6 352.3 319.4 352.4 321.1 352.5 319.2 352.6 321.0 352.7 326.3 352.8 320.0 352.9 327.3 353.0 323.0 353.1 321.1 353.2 320.9 353.3 318.3 353.4 327.9 353.5 321.2 353.6 321.1 353.7 323.9 353.8 321.6 353.9 330.7 354.0 324.7 354.1 319.1 354.2 321.9 354.3 307.3 354.4 322.2 354.5 320.7 354.6 320.9 354.7 318.7 354.8 318.2 354.9 322.5 355.0 319.2 355.1 320.9 355.2 314.0 355.3 317.1 355.4 322.6 355.5 318.3 355.6 325.7 355.7 324.1 355.8 324.1 355.9 325.7 356.0 327.7 356.1 324.2 356.2 322.8 356.3 322.4 356.4 319.9 356.5 321.6 356.6 315.8 356.7 321.3 356.8 324.3 356.9 322.5 357.0 324.2 357.1 316.1 357.2 314.9 357.3 327.9 357.4 320.7 357.5 319.3 357.6 320.9 357.7 324.7 357.8 318.8 357.9 322.0 358.0 320.6 358.1 324.3 358.2 316.3 358.3 320.6 358.4 317.8 358.5 321.3 358.6 328.2 358.7 316.8 358.8 328.1 358.9 320.8 359.0 317.1 359.1 321.6 359.2 327.3 359.3 309.4 359.4 320.4 359.5 317.9 359.6 323.2 359.7 325.0 359.8 314.1 359.9 324.1 360.0 322.7 360.1 324.2 360.2 318.6 360.3 322.7 360.4 320.5 360.5 318.7 360.6 319.0 360.7 330.7 360.8 317.9 360.9 319.2 361.0 323.1 361.1 320.8 361.2 319.5 361.3 322.3 361.4 313.1 361.5 321.1 361.6 320.6 361.7 316.0 361.8 320.4 361.9 322.1 362.0 323.7 362.1 321.7 362.2 322.1 362.3 321.9 362.4 317.6 362.5 323.7 362.6 318.6 362.7 320.9 362.8 320.3 362.9 315.9 363.0 320.1 363.1 316.4 363.2 322.6 363.3 317.3 363.4 314.5 363.5 313.3 363.6 321.5 363.7 317.7 363.8 318.2 363.9 322.1 364.0 313.8 364.1 322.8 364.2 322.4 364.3 316.3 364.4 315.8 364.5 322.1 364.6 323.7 364.7 318.7 364.8 316.5 364.9 318.7 365.0 322.0 365.1 324.6 365.2 320.4 365.3 327.7 365.4 320.6 365.5 313.2 365.6 321.7 365.7 318.0 365.8 320.7 365.9 325.0 366.0 320.3 366.1 324.0 366.2 323.5 366.3 319.4 366.4 320.9 366.5 323.0 366.6 324.2 366.7 320.2 366.8 321.8 366.9 326.5 367.0 318.3 367.1 319.1 367.2 319.0 367.3 324.3 367.4 321.8 367.5 321.4 367.6 315.2 367.7 320.8 367.8 317.5 367.9 325.6 368.0 319.9 368.1 320.4 368.2 321.3 368.3 314.9 368.4 317.4 368.5 324.1 368.6 319.6 368.7 319.6 368.8 318.1 368.9 321.9 369.0 319.8 369.1 319.0 369.2 316.2 369.3 316.2 369.4 324.5 369.5 318.1 369.6 325.1 369.7 319.1 369.8 322.0 369.9 321.0 370.0 318.5 370.1 320.3 370.2 317.5 370.3 318.6 370.4 316.6 370.5 312.3 370.6 317.5 370.7 321.8 370.8 324.2 370.9 318.6 371.0 314.7 371.1 318.5 371.2 318.7 371.3 318.3 371.4 325.3 371.5 313.6 371.6 321.8 371.7 317.4 371.8 324.9 371.9 321.5 372.0 327.8 372.1 321.6 372.2 322.6 372.3 319.5 372.4 314.9 372.5 313.6 372.6 329.0 372.7 317.5 372.8 325.4 372.9 318.6 373.0 321.4 373.1 318.9 373.2 319.2 373.3 323.1 373.4 319.4 373.5 308.3 373.6 325.4 373.7 318.7 373.8 321.0 373.9 320.8 374.0 315.1 374.1 323.0 374.2 318.1 374.3 318.9 374.4 318.3 374.5 318.1 374.6 318.3 374.7 319.2 374.8 319.2 374.9 319.2 375.0 324.1 375.1 320.7 375.2 312.7 375.3 319.3 375.4 319.8 375.5 318.7 375.6 324.5 375.7 316.5 375.8 318.8 375.9 320.4 376.0 318.1 376.1 323.6 376.2 321.3 376.3 322.6 376.4 323.0 376.5 329.5 376.6 322.4 376.7 319.3 376.8 319.7 376.9 323.0 377.0 322.2 377.1 318.9 377.2 319.9 377.3 320.0 377.4 321.1 377.5 319.0 377.6 320.3 377.7 321.7 377.8 320.8 377.9 317.1 378.0 326.3 378.1 321.0 378.2 311.4 378.3 318.3 378.4 324.2 378.5 322.6 378.6 319.4 378.7 323.0 378.8 317.0 378.9 316.3 379.0 320.5 379.1 316.2 379.2 317.0 379.3 316.9 379.4 324.0 379.5 318.0 379.6 322.7 379.7 315.9 379.8 322.2 379.9 313.8 380.0 314.3 380.1 321.8 380.2 323.0 380.3 323.1 380.4 318.9 380.5 319.7 380.6 323.4 380.7 317.4 380.8 318.3 380.9 316.7 381.0 320.5 381.1 323.3 381.2 320.6 381.3 317.6 381.4 321.1 381.5 321.1 381.6 321.6 381.7 321.7 381.8 321.5 381.9 322.6 382.0 317.1 382.1 319.0 382.2 318.7 382.3 319.9 382.4 323.1 382.5 324.9 382.6 314.5 382.7 322.7 382.8 321.5 382.9 315.5 383.0 321.9 383.1 324.9 383.2 319.9 383.3 314.5 383.4 315.5 383.5 319.8 383.6 313.3 383.7 322.7 383.8 321.3 383.9 324.3 384.0 320.4 384.1 325.6 384.2 322.0 384.3 320.8 384.4 320.9 384.5 313.4 384.6 321.0 384.7 313.0 384.8 319.7 384.9 318.8 385.0 314.2 385.1 324.1 385.2 316.6 385.3 322.6 385.4 317.9 385.5 322.0 385.6 317.0 385.7 322.6 385.8 317.6 385.9 321.2 386.0 321.4 386.1 321.4 386.2 318.1 386.3 320.6 386.4 320.1 386.5 317.5 386.6 324.6 386.7 318.2 386.8 317.0 386.9 316.3 387.0 322.1 387.1 319.6 387.2 317.4 387.3 319.9 387.4 325.8 387.5 314.7 387.6 319.8 387.7 318.3 387.8 316.5 387.9 325.6 388.0 325.8 388.1 320.3 388.2 318.7 388.3 323.6 388.4 320.6 388.5 317.8 388.6 318.3 388.7 318.5 388.8 321.7 388.9 326.6 389.0 318.4 389.1 316.8 389.2 318.6 389.3 318.0 389.4 322.1 389.5 320.0 389.6 324.9 389.7 324.4 389.8 320.8 389.9 316.1 390.0 317.9 390.1 317.9 390.2 321.0 390.3 320.8 390.4 317.7 390.5 316.6 390.6 317.3 390.7 317.8 390.8 323.5 390.9 316.7 391.0 321.5 391.1 322.6 391.2 314.4 391.3 312.7 391.4 317.7 391.5 317.7 391.6 318.3 391.7 321.6 391.8 318.0 391.9 316.9 392.0 322.5 392.1 321.0 392.2 315.4 392.3 321.4 392.4 320.9 392.5 319.0 392.6 320.2 392.7 317.8 392.8 318.3 392.9 322.9 393.0 314.6 393.1 332.0 393.2 321.7 393.3 312.4 393.4 317.4 393.5 323.4 393.6 317.3 393.7 317.8 393.8 321.0 393.9 320.6 394.0 320.9 394.1 326.1 394.2 321.9 394.3 318.2 394.4 316.2 394.5 322.8 394.6 323.5 394.7 316.0 394.8 318.9 394.9 324.9 395.0 320.8 395.1 316.9 395.2 321.7 395.3 326.6 395.4 320.3 395.5 320.3 395.6 319.7 395.7 315.1 395.8 321.4 395.9 317.8 396.0 321.4 396.1 317.4 396.2 320.1 396.3 320.0 396.4 319.5 396.5 323.7 396.6 322.9 396.7 324.9 396.8 320.2 396.9 320.2 397.0 318.5 397.1 316.5 397.2 319.0 397.3 318.1 397.4 322.4 397.5 322.6 397.6 322.6 397.7 319.8 397.8 324.1 397.9 321.6 398.0 315.5 398.1 313.5 398.2 319.1 398.3 316.0 398.4 321.3 398.5 321.2 398.6 318.3 398.7 316.5 398.8 314.8 398.9 316.5 399.0 317.5 399.1 323.1 399.2 313.9 399.3 325.4 399.4 316.6 399.5 317.8 399.6 319.0 399.7 320.0 399.8 324.1 399.9 326.1 400.0 323.6 400.1 321.9 400.2 318.3 400.3 314.7 400.4 320.1 400.5 316.9 400.6 324.3 400.7 321.3 400.8 325.3 400.9 311.7 401.0 316.5 401.1 319.4 401.2 319.0 401.3 321.6 401.4 315.1 401.5 313.6 401.6 316.9 401.7 317.3 401.8 319.7 401.9 312.1 402.0 316.7 402.1 322.1 402.2 316.5 402.3 326.1 402.4 315.8 402.5 318.2 402.6 320.9 402.7 321.4 402.8 318.0 402.9 320.2 403.0 318.7 403.1 321.2 403.2 315.9 403.3 319.2 403.4 320.7 403.5 318.3 403.6 322.7 403.7 316.7 403.8 317.4 403.9 319.4 404.0 319.5 404.1 319.9 404.2 321.0 404.3 318.8 404.4 319.1 404.5 322.2 404.6 320.7 404.7 316.4 404.8 317.9 404.9 323.9 405.0 322.4 405.1 320.2 405.2 314.6 405.3 320.2 405.4 317.7 405.5 317.2 405.6 321.6 405.7 315.9 405.8 319.5 405.9 319.8 406.0 326.0 406.1 322.0 406.2 322.3 406.3 326.6 406.4 316.2 406.5 320.3 406.6 322.3 406.7 318.7 406.8 319.9 406.9 319.1 407.0 320.6 407.1 327.0 407.2 323.8 407.3 318.3 407.4 320.1 407.5 325.4 407.6 317.2 407.7 318.6 407.8 317.3 407.9 319.3 408.0 321.9 408.1 321.1 408.2 310.7 408.3 324.3 408.4 319.5 408.5 317.7 408.6 321.0 408.7 318.9 408.8 320.2 408.9 317.8 409.0 315.8 409.1 320.7 409.2 315.8 409.3 316.5 409.4 316.6 409.5 319.4 409.6 317.3 409.7 325.0 409.8 316.6 409.9 312.5 410.0 323.2 410.1 322.0 410.2 318.6 410.3 321.8 410.4 325.7 410.5 314.4 410.6 318.6 410.7 313.9 410.8 321.0 410.9 321.2 411.0 323.9 411.1 327.2 411.2 319.4 411.3 319.2 411.4 319.3 411.5 313.6 411.6 320.2 411.7 325.5 411.8 318.9 411.9 322.0 412.0 318.1 412.1 318.9 412.2 316.9 412.3 316.3 412.4 317.1 412.5 321.9 412.6 316.2 412.7 322.5 412.8 314.7 412.9 318.1 413.0 322.3 413.1 320.1 413.2 325.1 413.3 312.8 413.4 323.2 413.5 320.5 413.6 321.7 413.7 318.0 413.8 316.0 413.9 318.2 414.0 317.8 414.1 321.1 414.2 322.6 414.3 319.6 414.4 316.6 414.5 318.5 414.6 316.3 414.7 317.4 414.8 318.5 414.9 318.5 415.0 321.9 415.1 325.3 415.2 317.9 415.3 317.3 415.4 321.1 415.5 319.9 415.6 320.2 415.7 325.3 415.8 322.6 415.9 316.3 416.0 324.8 416.1 318.4 416.2 316.7 416.3 317.5 416.4 319.2 416.5 317.2 416.6 320.3 416.7 321.4 416.8 319.8 416.9 318.0 417.0 309.6 417.1 322.7 417.2 316.4 417.3 310.1 417.4 316.3 417.5 319.1 417.6 315.6 417.7 318.7 417.8 327.1 417.9 325.9 418.0 323.8 418.1 316.0 418.2 325.0 418.3 317.6 418.4 322.1 418.5 321.3 418.6 321.0 418.7 320.2 418.8 316.0 418.9 324.7 419.0 321.0 419.1 319.8 419.2 317.5 419.3 315.1 419.4 324.0 419.5 321.6 419.6 318.5 419.7 313.8 419.8 324.2 419.9 315.6 420.0 317.3 420.1 317.7 420.2 317.5 420.3 325.2 420.4 316.2 420.5 316.0 420.6 318.2 420.7 321.8 420.8 322.1 420.9 316.2 421.0 317.9 421.1 321.4 421.2 314.3 421.3 314.0 421.4 319.6 421.5 325.7 421.6 320.1 421.7 318.9 421.8 325.4 421.9 316.0 422.0 319.9 422.1 322.2 422.2 323.7 422.3 318.8 422.4 319.2 422.5 321.1 422.6 319.0 422.7 319.7 422.8 318.7 422.9 316.3 423.0 320.0 423.1 319.5 423.2 320.9 423.3 321.2 423.4 320.0 423.5 312.5 423.6 320.4 423.7 323.5 423.8 319.8 423.9 314.6 424.0 323.3 424.1 317.7 424.2 319.6 424.3 314.8 424.4 319.0 424.5 319.2 424.6 315.9 424.7 323.6 424.8 321.7 424.9 313.0 425.0 325.7 425.1 316.1 425.2 320.8 425.3 324.0 425.4 320.1 425.5 320.6 425.6 321.4 425.7 314.8 425.8 321.8 425.9 319.0 426.0 322.7 426.1 324.7 426.2 322.9 426.3 318.8 426.4 328.9 426.5 323.6 426.6 319.3 426.7 318.5 426.8 319.7 426.9 323.5 427.0 323.2 427.1 316.2 427.2 321.6 427.3 324.8 427.4 320.1 427.5 321.8 427.6 321.7 427.7 322.8 427.8 319.7 427.9 323.2 428.0 313.5 428.1 316.4 428.2 311.9 428.3 326.0 428.4 320.7 428.5 324.6 428.6 322.8 428.7 323.4 428.8 320.1 428.9 324.9 429.0 315.1 429.1 317.1 429.2 324.0 429.3 321.4 429.4 321.1 429.5 322.0 429.6 318.7 429.7 321.3 429.8 311.8 429.9 319.0 430.0 322.0 430.1 320.4 430.2 328.4 430.3 325.2 430.4 319.6 430.5 320.7 430.6 316.2 430.7 316.0 430.8 319.1 430.9 320.5 431.0 316.5 431.1 321.8 431.2 323.2 431.3 322.7 431.4 321.6 431.5 320.8 431.6 314.0 431.7 311.4 431.8 324.1 431.9 314.2 432.0 320.0 432.1 317.0 432.2 323.2 432.3 316.4 432.4 322.8 432.5 322.4 432.6 315.4 432.7 319.3 432.8 322.4 432.9 319.0 433.0 322.3 433.1 324.8 433.2 313.9 433.3 319.0 433.4 320.0 433.5 317.3 433.6 325.6 433.7 321.7 433.8 313.7 433.9 320.2 434.0 320.3 434.1 320.2 434.2 323.2 434.3 320.5 434.4 318.7 434.5 316.0 434.6 320.4 434.7 319.7 434.8 317.0 434.9 321.2 435.0 315.3 435.1 319.6 435.2 323.3 435.3 315.6 435.4 323.4 435.5 315.3 435.6 320.0 435.7 317.6 435.8 315.3 435.9 317.2 436.0 322.3 436.1 318.0 436.2 319.8 436.3 320.9 436.4 324.5 436.5 319.1 436.6 321.1 436.7 315.8 436.8 313.7 436.9 320.6 437.0 322.9 437.1 317.3 437.2 324.5 437.3 319.7 437.4 319.5 437.5 323.2 437.6 321.9 437.7 312.7 437.8 325.9 437.9 318.5 438.0 319.5 438.1 323.6 438.2 315.6 438.3 320.6 438.4 321.7 438.5 322.1 438.6 322.0 438.7 314.4 438.8 313.6 438.9 314.6 439.0 320.7 439.1 317.6 439.2 320.4 439.3 322.8 439.4 324.9 439.5 321.6 439.6 319.7 439.7 318.6 439.8 322.7 439.9 317.0 440.0 321.6 440.1 322.0 440.2 314.6 440.3 319.9 440.4 321.8 440.5 323.2 440.6 323.0 440.7 317.4 440.8 315.4 440.9 323.8 441.0 320.2 441.1 319.7 441.2 319.6 441.3 314.3 441.4 317.9 441.5 323.1 441.6 317.4 441.7 317.4 441.8 325.3 441.9 325.9 442.0 320.7 442.1 318.4 442.2 318.2 442.3 319.4 442.4 320.3 442.5 314.1 442.6 326.1 442.7 324.9 442.8 318.8 442.9 322.0 443.0 329.6 443.1 323.6 443.2 319.7 443.3 317.9 443.4 320.2 443.5 326.1 443.6 321.8 443.7 316.5 443.8 312.0 443.9 321.6 444.0 321.2 444.1 317.2 444.2 320.0 444.3 313.4 444.4 322.5 444.5 314.8 444.6 321.5 444.7 323.3 444.8 322.9 444.9 320.9 445.0 318.1 445.1 328.6 445.2 321.8 445.3 317.4 445.4 318.3 445.5 323.6 445.6 319.1 445.7 318.6 445.8 316.3 445.9 321.8 446.0 319.1 446.1 315.6 446.2 321.1 446.3 321.7 446.4 320.4 446.5 319.1 446.6 321.3 446.7 320.4 446.8 315.8 446.9 320.5 447.0 326.0 447.1 314.3 447.2 319.5 447.3 318.1 447.4 321.9 447.5 316.7 447.6 327.0 447.7 321.9 447.8 322.0 447.9 320.3 448.0 321.5 448.1 317.1 448.2 326.2 448.3 322.4 448.4 319.9 448.5 322.3 448.6 321.7 448.7 319.2 448.8 320.6 448.9 323.5 449.0 314.3 449.1 318.3 449.2 320.7 449.3 320.0 449.4 318.4 449.5 321.3 449.6 324.0 449.7 315.8 449.8 324.1 449.9 324.2 450.0 322.0 450.1 318.7 450.2 318.9 450.3 319.3 450.4 324.1 450.5 320.2 450.6 317.0 450.7 316.9 450.8 319.6 450.9 316.4 451.0 319.4 451.1 323.9 451.2 318.1 451.3 315.4 451.4 324.1 451.5 329.0 451.6 319.9 451.7 314.6 451.8 322.5 451.9 322.8 452.0 325.4 452.1 319.8 452.2 324.0 452.3 320.3 452.4 320.4 452.5 318.3 452.6 326.5 452.7 319.1 452.8 316.8 452.9 319.0 453.0 318.3 453.1 317.2 453.2 322.6 453.3 315.9 453.4 316.5 453.5 324.2 453.6 323.7 453.7 312.3 453.8 326.0 453.9 318.6 454.0 310.8 454.1 316.2 454.2 316.2 454.3 324.3 454.4 319.3 454.5 314.5 454.6 324.7 454.7 319.8 454.8 324.0 454.9 323.4 455.0 323.0 455.1 315.4 455.2 325.5 455.3 319.5 455.4 320.8 455.5 329.6 455.6 319.6 455.7 319.6 455.8 318.0 455.9 324.8 456.0 312.0 456.1 315.9 456.2 314.9 456.3 322.4 456.4 323.5 456.5 316.6 456.6 311.1 456.7 321.2 456.8 314.8 456.9 317.8 457.0 322.8 457.1 319.8 457.2 322.7 457.3 316.5 457.4 318.7 457.5 321.1 457.6 319.7 457.7 324.7 457.8 315.4 457.9 318.5 458.0 317.5 458.1 316.5 458.2 320.0 458.3 320.9 458.4 324.8 458.5 319.8 458.6 318.0 458.7 321.4 458.8 327.1 458.9 322.8 459.0 315.6 459.1 324.0 459.2 320.1 459.3 321.3 459.4 321.5 459.5 319.4 459.6 320.9 459.7 318.5 459.8 315.2 459.9 315.9 460.0 319.0 460.1 319.6 460.2 326.1 460.3 318.5 460.4 321.4 460.5 313.9 460.6 325.8 460.7 327.1 460.8 321.5 460.9 322.7 461.0 318.1 461.1 321.1 461.2 324.0 461.3 322.6 461.4 322.1 461.5 323.9 461.6 317.6 461.7 317.3 461.8 321.7 461.9 323.2 462.0 315.8 462.1 318.5 462.2 322.8 462.3 324.7 462.4 324.4 462.5 318.2 462.6 325.0 462.7 318.5 462.8 324.5 462.9 323.3 463.0 324.2 463.1 318.6 463.2 319.3 463.3 320.3 463.4 320.2 463.5 320.8 463.6 327.7 463.7 321.7 463.8 322.8 463.9 326.0 464.0 316.6 464.1 322.5 464.2 320.6 464.3 315.4 464.4 316.2 464.5 318.7 464.6 318.8 464.7 322.4 464.8 321.4 464.9 320.0 465.0 317.6 465.1 321.7 465.2 322.4 465.3 323.7 465.4 319.8 465.5 312.7 465.6 324.7 465.7 319.4 465.8 309.9 465.9 322.5 466.0 323.2 466.1 319.1 466.2 320.9 466.3 317.0 466.4 324.4 466.5 321.5 466.6 322.2 466.7 325.8 466.8 321.7 466.9 321.4 467.0 318.6 467.1 319.8 467.2 318.2 467.3 320.0 467.4 318.8 467.5 326.2 467.6 317.9 467.7 323.4 467.8 316.5 467.9 322.9 468.0 317.5 468.1 321.0 468.2 322.4 468.3 316.7 468.4 319.3 468.5 319.6 468.6 320.8 468.7 325.9 468.8 325.3 468.9 321.2 469.0 320.0 469.1 326.8 469.2 326.8 469.3 317.6 469.4 323.7 469.5 322.6 469.6 321.5 469.7 319.2 469.8 328.0 469.9 324.9 470.0 317.7 470.1 318.5 470.2 319.7 470.3 313.7 470.4 320.4 470.5 321.7 470.6 317.4 470.7 316.7 470.8 315.0 470.9 321.1 471.0 323.7 471.1 320.2 471.2 324.1 471.3 322.1 471.4 316.0 471.5 326.6 471.6 319.9 471.7 319.0 471.8 322.6 471.9 315.8 472.0 316.4 472.1 321.1 472.2 317.6 472.3 310.5 472.4 319.1 472.5 323.2 472.6 315.3 472.7 318.6 472.8 328.8 472.9 321.3 473.0 324.0 473.1 315.6 473.2 319.7 473.3 320.1 473.4 323.3 473.5 320.9 473.6 315.8 473.7 317.4 473.8 320.6 473.9 320.5 474.0 322.9 474.1 319.4 474.2 320.4 474.3 320.6 474.4 316.9 474.5 318.4 474.6 322.8 474.7 320.7 474.8 322.1 474.9 321.0 475.0 323.2 475.1 318.6 475.2 323.9 475.3 321.5 475.4 322.9 475.5 323.6 475.6 320.7 475.7 317.4 475.8 325.0 475.9 321.2 476.0 318.9 476.1 322.7 476.2 320.3 476.3 314.6 476.4 320.5 476.5 315.4 476.6 313.8 476.7 321.2 476.8 317.7 476.9 320.7 477.0 318.8 477.1 319.4 477.2 319.6 477.3 317.5 477.4 321.0 477.5 318.1 477.6 327.6 477.7 320.7 477.8 330.3 477.9 318.7 478.0 322.6 478.1 322.6 478.2 317.8 478.3 320.2 478.4 322.5 478.5 317.9 478.6 314.0 478.7 322.2 478.8 318.4 478.9 322.8 479.0 315.9 479.1 317.7 479.2 316.2 479.3 319.8 479.4 314.1 479.5 322.2 479.6 324.2 479.7 316.8 479.8 324.2 479.9 312.2 480.0 315.3 480.1 324.6 480.2 328.9 480.3 324.3 480.4 322.2 480.5 322.0 480.6 317.2 480.7 318.6 480.8 318.2 480.9 322.2 481.0 325.1 481.1 314.8 481.2 326.1 481.3 321.2 481.4 321.3 481.5 318.3 481.6 319.6 481.7 328.1 481.8 318.8 481.9 321.7 482.0 314.8 482.1 319.0 482.2 326.1 482.3 320.5 482.4 319.5 482.5 318.1 482.6 314.9 482.7 322.0 482.8 314.4 482.9 323.1 483.0 321.3 483.1 317.2 483.2 319.9 483.3 318.6 483.4 316.5 483.5 327.1 483.6 323.5 483.7 320.9 483.8 318.9 483.9 316.8 484.0 314.5 484.1 324.9 484.2 322.3 484.3 319.5 484.4 316.5 484.5 323.2 484.6 321.9 484.7 317.0 484.8 321.5 484.9 321.3 485.0 318.4 485.1 316.9 485.2 319.1 485.3 322.2 485.4 324.9 485.5 325.5 485.6 322.7 485.7 315.2 485.8 324.4 485.9 320.9 486.0 324.4 486.1 318.3 486.2 318.8 486.3 320.3 486.4 318.4 486.5 327.3 486.6 321.7 486.7 318.5 486.8 323.2 486.9 319.7 487.0 317.8 487.1 315.8 487.2 318.8 487.3 318.5 487.4 316.3 487.5 318.9 487.6 322.8 487.7 318.8 487.8 320.1 487.9 321.9 488.0 323.0 488.1 317.0 488.2 320.8 488.3 316.2 488.4 314.3 488.5 324.0 488.6 319.0 488.7 323.1 488.8 324.9 488.9 315.6 489.0 322.0 489.1 322.1 489.2 320.6 489.3 320.8 489.4 324.0 489.5 322.6 489.6 314.9 489.7 318.6 489.8 320.1 489.9 322.6 490.0 321.2 490.1 325.1 490.2 321.6 490.3 317.0 490.4 319.6 490.5 318.8 490.6 328.1 490.7 325.3 490.8 319.6 490.9 322.6 491.0 325.9 491.1 322.5 491.2 315.9 491.3 318.8 491.4 318.6 491.5 323.8 491.6 315.8 491.7 318.1 491.8 321.1 491.9 329.9 492.0 318.5 492.1 317.9 492.2 325.3 492.3 326.5 492.4 322.5 492.5 325.0 492.6 319.8 492.7 320.8 492.8 319.3 492.9 323.4 493.0 323.0 493.1 319.2 493.2 314.5 493.3 315.2 493.4 323.8 493.5 321.6 493.6 320.3 493.7 317.8 493.8 322.2 493.9 322.9 494.0 314.4 494.1 323.2 494.2 323.0 494.3 320.4 494.4 324.2 494.5 320.7 494.6 322.0 494.7 316.9 494.8 318.3 494.9 317.5 495.0 320.5 495.1 321.6 495.2 319.5 495.3 320.0 495.4 321.1 495.5 317.6 495.6 320.8 495.7 321.1 495.8 320.2 495.9 319.1 496.0 319.3 496.1 320.7 496.2 319.9 496.3 320.9 496.4 327.4 496.5 317.6 496.6 313.3 496.7 322.8 496.8 319.3 496.9 318.3 497.0 319.8 497.1 323.5 497.2 319.2 497.3 322.1 497.4 324.0 497.5 324.8 497.6 314.6 497.7 325.9 497.8 323.3 497.9 317.0 498.0 320.7 498.1 323.6 498.2 326.1 498.3 327.2 498.4 316.8 498.5 323.1 498.6 317.3 498.7 320.3 498.8 319.8 498.9 316.4 499.0 316.4 499.1 322.5 499.2 323.9 499.3 320.8 499.4 322.3 499.5 316.6 499.6 324.2 499.7 321.1 499.8 326.0 499.9 316.8 500.0 317.6 500.1 322.3 500.2 320.1 500.3 317.4 500.4 317.2 500.5 316.8 500.6 318.8 500.7 322.0 500.8 324.3 500.9 319.2 501.0 319.6 501.1 324.6 501.2 317.8 501.3 316.4 501.4 324.4 501.5 321.3 501.6 318.7 501.7 315.1 501.8 327.6 501.9 322.5 502.0 318.6 502.1 320.0 502.2 317.5 502.3 317.0 502.4 321.5 502.5 314.6 502.6 314.8 502.7 321.4 502.8 321.4 502.9 317.0 503.0 324.5 503.1 325.4 503.2 318.9 503.3 317.4 503.4 319.4 503.5 316.3 503.6 315.5 503.7 323.4 503.8 314.5 503.9 320.9 504.0 320.8 504.1 319.3 504.2 327.6 504.3 316.4 504.4 320.9 504.5 320.1 504.6 323.7 504.7 316.6 504.8 321.5 504.9 326.5 505.0 321.3 505.1 319.4 505.2 317.4 505.3 322.5 505.4 322.0 505.5 323.4 505.6 319.1 505.7 320.3 505.8 317.6 505.9 319.0 506.0 323.0 506.1 321.0 506.2 325.0 506.3 319.0 506.4 316.7 506.5 315.8 506.6 324.8 506.7 318.2 506.8 317.0 506.9 321.3 507.0 318.4 507.1 317.2 507.2 320.1 507.3 311.6 507.4 323.7 507.5 323.0 507.6 319.4 507.7 318.8 507.8 317.6 507.9 323.7 508.0 314.3 508.1 322.3 508.2 324.5 508.3 321.8 508.4 315.5 508.5 315.3 508.6 319.0 508.7 319.8 508.8 314.6 508.9 323.5 509.0 314.2 509.1 313.6 509.2 316.4 509.3 321.2 509.4 317.7 509.5 319.3 509.6 317.6 509.7 322.3 509.8 323.2 509.9 315.1 510.0 317.5 510.1 315.5 510.2 316.1 510.3 318.1 510.4 320.4 510.5 314.8 510.6 325.0 510.7 318.0 510.8 321.1 510.9 325.5 511.0 314.1 511.1 321.5 511.2 321.9 511.3 321.5 511.4 317.4 511.5 319.2 511.6 324.5 511.7 319.7 511.8 317.2 511.9 319.5 512.0 318.9 512.1 310.2 512.2 320.6 512.3 314.9 512.4 321.5 512.5 322.7 512.6 325.0 512.7 323.3 512.8 319.0 512.9 318.2 513.0 320.3 513.1 313.8 513.2 322.8 513.3 320.4 513.4 320.2 513.5 320.2 513.6 318.2 513.7 320.1 513.8 316.6 513.9 317.3 514.0 318.6 514.1 319.7 514.2 321.5 514.3 318.4 514.4 315.3 514.5 319.1 514.6 322.5 514.7 318.8 514.8 322.5 514.9 320.9 515.0 316.2 515.1 321.1 515.2 323.7 515.3 319.6 515.4 319.2 515.5 320.0 515.6 321.1 515.7 313.9 515.8 321.1 515.9 323.7 516.0 323.1 516.1 322.1 516.2 321.1 516.3 319.3 516.4 330.5 516.5 318.8 516.6 315.3 516.7 317.8 516.8 320.5 516.9 314.6 517.0 320.7 517.1 320.8 517.2 314.5 517.3 319.7 517.4 315.0 517.5 317.3 517.6 325.4 517.7 317.5 517.8 313.8 517.9 323.4 518.0 319.3 518.1 313.5 518.2 312.9 518.3 319.4 518.4 316.8 518.5 319.9 518.6 324.1 518.7 320.6 518.8 323.5 518.9 318.7 519.0 312.5 519.1 318.5 519.2 314.7 519.3 322.8 519.4 314.4 519.5 324.8 519.6 325.3 519.7 320.0 519.8 319.1 519.9 318.8 520.0 322.6 520.1 316.4 520.2 324.8 520.3 320.1 520.4 317.8 520.5 322.4 520.6 320.9 520.7 321.6 520.8 316.5 520.9 314.9 521.0 315.3 521.1 317.0 521.2 314.9 521.3 318.7 521.4 308.4 521.5 320.9 521.6 315.5 521.7 321.0 521.8 316.9 521.9 318.5 522.0 322.1 522.1 321.4 522.2 316.9 522.3 318.1 522.4 318.5 522.5 317.3 522.6 319.3 522.7 328.1 522.8 315.2 522.9 323.4 523.0 317.6 523.1 317.8 523.2 318.0 523.3 319.2 523.4 320.0 523.5 323.5 523.6 322.7 523.7 317.9 523.8 322.6 523.9 326.0 524.0 316.4 524.1 313.9 524.2 322.1 524.3 324.4 524.4 319.9 524.5 316.9 524.6 322.3 524.7 322.6 524.8 316.1 524.9 323.2 525.0 321.5 525.1 316.1 525.2 318.7 525.3 319.6 525.4 319.6 525.5 320.4 525.6 322.5 525.7 318.1 525.8 318.9 525.9 322.5 526.0 315.7 526.1 309.1 526.2 315.1 526.3 322.0 526.4 317.9 526.5 322.0 526.6 322.7 526.7 313.0 526.8 317.2 526.9 321.5 527.0 313.2 527.1 309.2 527.2 319.0 527.3 325.7 527.4 323.0 527.5 317.5 527.6 322.0 527.7 313.6 527.8 319.9 527.9 315.7 528.0 321.5 528.1 317.3 528.2 321.2 528.3 318.2 528.4 317.7 528.5 326.4 528.6 317.5 528.7 326.9 528.8 319.9 528.9 321.5 529.0 317.2 529.1 318.1 529.2 324.8 529.3 317.3 529.4 318.9 529.5 313.8 529.6 314.5 529.7 327.2 529.8 323.2 529.9 323.9 530.0 316.2 530.1 326.2 530.2 322.4 530.3 322.5 530.4 319.5 530.5 317.4 530.6 316.2 530.7 322.2 530.8 318.4 530.9 320.6 531.0 320.3 531.1 317.8 531.2 323.1 531.3 320.3 531.4 317.4 531.5 316.9 531.6 318.1 531.7 318.2 531.8 326.4 531.9 321.5 532.0 318.9 532.1 326.2 532.2 320.1 532.3 319.4 532.4 318.5 532.5 316.0 532.6 322.1 532.7 321.8 532.8 316.3 532.9 324.7 533.0 329.5 533.1 320.0 533.2 319.8 533.3 321.9 533.4 318.9 533.5 317.2 533.6 324.5 533.7 310.2 533.8 325.3 533.9 323.5 534.0 316.2 534.1 317.2 534.2 315.8 534.3 327.4 534.4 320.1 534.5 313.4 534.6 320.6 534.7 324.0 534.8 318.3 534.9 317.4 535.0 323.6 535.1 318.5 535.2 326.1 535.3 322.9 535.4 317.2 535.5 316.4 535.6 318.2 535.7 319.6 535.8 316.2 535.9 320.9 536.0 325.3 536.1 323.6 536.2 322.7 536.3 316.2 536.4 320.6 536.5 316.8 536.6 316.1 536.7 312.3 536.8 318.6 536.9 318.0 537.0 317.0 537.1 323.7 537.2 319.1 537.3 322.1 537.4 320.6 537.5 317.9 537.6 319.6 537.7 320.4 537.8 321.4 537.9 323.7 538.0 318.7 538.1 320.4 538.2 317.8 538.3 319.3 538.4 313.1 538.5 324.1 538.6 319.1 538.7 315.6 538.8 317.8 538.9 320.9 539.0 318.5 539.1 318.8 539.2 316.9 539.3 320.9 539.4 315.6 539.5 323.3 539.6 317.0 539.7 324.9 539.8 318.6 539.9 320.9 540.0 315.3 540.1 316.9 540.2 315.7 540.3 325.2 540.4 316.4 540.5 328.5 540.6 312.4 540.7 319.2 540.8 319.3 540.9 315.5 541.0 319.1 541.1 321.5 541.2 320.8 541.3 320.5 541.4 319.0 541.5 315.7 541.6 317.2 541.7 326.6 541.8 320.7 541.9 319.0 542.0 316.6 542.1 319.3 542.2 319.4 542.3 323.1 542.4 319.1 542.5 321.3 542.6 324.4 542.7 319.9 542.8 323.8 542.9 321.8 543.0 316.2 543.1 320.1 543.2 322.1 543.3 316.1 543.4 314.8 543.5 312.9 543.6 317.5 543.7 319.2 543.8 318.5 543.9 323.5 544.0 323.7 544.1 315.3 544.2 318.8 544.3 317.3 544.4 322.9 544.5 323.4 544.6 320.0 544.7 318.3 544.8 322.4 544.9 323.9 545.0 316.1 545.1 313.2 545.2 320.5 545.3 320.5 545.4 322.7 545.5 315.2 545.6 313.9 545.7 309.5 545.8 318.0 545.9 318.7 546.0 323.2 546.1 315.5 546.2 324.9 546.3 317.7 546.4 324.1 546.5 323.8 546.6 319.3 546.7 324.2 546.8 323.8 546.9 312.8 547.0 315.0 547.1 329.4 547.2 323.7 547.3 322.1 547.4 321.2 547.5 317.1 547.6 325.5 547.7 314.1 547.8 318.8 547.9 325.7 548.0 321.5 548.1 316.0 548.2 325.5 548.3 316.3 548.4 322.3 548.5 323.6 548.6 320.4 548.7 314.2 548.8 321.0 548.9 319.9 549.0 314.9 549.1 312.8 549.2 319.8 549.3 313.7 549.4 318.3 549.5 322.1 549.6 327.2 549.7 321.5 549.8 314.1 549.9 320.8 550.0 314.5 550.1 322.8 550.2 316.3 550.3 317.3 550.4 321.4 550.5 318.5 550.6 320.7 550.7 319.3 550.8 317.5 550.9 324.0 551.0 320.8 551.1 316.5 551.2 319.3 551.3 325.5 551.4 318.1 551.5 316.7 551.6 317.7 551.7 312.8 551.8 315.6 551.9 315.4 552.0 317.8 552.1 320.2 552.2 321.9 552.3 313.3 552.4 325.3 552.5 318.2 552.6 320.4 552.7 319.6 552.8 321.8 552.9 318.3 553.0 317.8 553.1 321.0 553.2 320.2 553.3 317.7 553.4 321.8 553.5 317.6 553.6 313.6 553.7 315.3 553.8 317.8 553.9 322.0 554.0 317.2 554.1 321.0 554.2 323.0 554.3 317.2 554.4 315.3 554.5 320.3 554.6 318.9 554.7 317.7 554.8 319.3 554.9 325.3 555.0 320.2 555.1 320.3 555.2 321.1 555.3 319.9 555.4 316.2 555.5 316.4 555.6 320.6 555.7 320.3 555.8 317.5 555.9 319.0 556.0 317.0 556.1 321.7 556.2 318.5 556.3 321.8 556.4 324.5 556.5 321.0 556.6 321.9 556.7 323.5 556.8 324.6 556.9 318.9 557.0 314.8 557.1 322.5 557.2 312.4 557.3 320.1 557.4 315.0 557.5 322.4 557.6 320.0 557.7 320.9 557.8 318.3 557.9 317.7 558.0 323.2 558.1 317.6 558.2 323.3 558.3 324.1 558.4 314.3 558.5 316.3 558.6 323.7 558.7 322.6 558.8 322.2 558.9 322.8 559.0 322.6 559.1 318.9 559.2 320.5 559.3 310.1 559.4 323.1 559.5 316.8 559.6 318.6 559.7 319.9 559.8 322.6 559.9 314.3 560.0 317.4 560.1 316.2 560.2 316.4 560.3 321.1 560.4 317.4 560.5 320.8 560.6 321.0 560.7 315.3 560.8 323.1 560.9 323.0 561.0 319.4 561.1 323.8 561.2 315.3 561.3 313.4 561.4 321.0 561.5 321.4 561.6 326.4 561.7 317.3 561.8 325.4 561.9 326.3 562.0 317.3 562.1 314.8 562.2 318.3 562.3 316.1 562.4 318.8 562.5 325.9 562.6 315.0 562.7 324.9 562.8 320.2 562.9 319.0 563.0 315.7 563.1 319.9 563.2 320.5 563.3 320.8 563.4 318.3 563.5 314.5 563.6 316.4 563.7 315.9 563.8 314.8 563.9 318.0 564.0 319.1 564.1 323.1 564.2 317.9 564.3 316.0 564.4 321.9 564.5 314.7 564.6 325.1 564.7 314.6 564.8 314.6 564.9 322.2 565.0 322.9 565.1 315.3 565.2 322.6 565.3 322.5 565.4 322.5 565.5 315.2 565.6 322.2 565.7 313.4 565.8 314.4 565.9 322.2 566.0 317.3 566.1 318.6 566.2 323.4 566.3 315.8 566.4 322.7 566.5 321.4 566.6 319.9 566.7 320.8 566.8 320.6 566.9 326.5 567.0 320.6 567.1 323.5 567.2 317.3 567.3 322.1 567.4 321.9 567.5 314.3 567.6 321.8 567.7 316.6 567.8 314.4 567.9 320.6 568.0 320.8 568.1 320.5 568.2 321.8 568.3 317.7 568.4 321.4 568.5 325.0 568.6 318.8 568.7 319.7 568.8 321.2 568.9 323.5 569.0 326.7 569.1 323.1 569.2 322.6 569.3 322.3 569.4 317.6 569.5 320.8 569.6 319.9 569.7 323.4 569.8 315.1 569.9 321.2 570.0 315.4 570.1 319.1 570.2 322.4 570.3 316.4 570.4 323.4 570.5 319.3 570.6 322.1 570.7 319.3 570.8 320.0 570.9 321.8" stroke="rgba(255,255,50,0.95)" stroke-width="1" fill="none"/>
</svg>
<!-- status bar -->
<div class="a" style="left:31px;top:471px;width:640px;height:1px;background:#c0c0c0"></div>
<div class="a" style="left:31px;top:472px;width:640px;height:13px;background:#f0f0f0"></div>
<svg class="a" style="left:0;top:0" width="676" height="490" viewBox="0 0 676 490">
<defs>
<linearGradient id="gmin" x1="0" y1="0" x2="0" y2="1"><stop offset="0" stop-color="#dfe4ec"/><stop offset=".5" stop-color="#c3cad6"/><stop offset="1" stop-color="#b0b8c8"/></linearGradient>
<linearGradient id="gcls" x1="0" y1="0" x2="0" y2="1"><stop offset="0" stop-color="#e4a898"/><stop offset=".45" stop-color="#d06a58"/><stop offset="1" stop-color="#c4503a"/></linearGradient>
<linearGradient id="gpre" x1="0" y1="0" x2="0" y2="1"><stop offset="0" stop-color="#b8e4fc"/><stop offset=".5" stop-color="#7cc8f4"/><stop offset="1" stop-color="#5ab4ec"/></linearGradient>
<linearGradient id="gchk" x1="0" y1="0" x2="1" y2="1"><stop offset="0" stop-color="#d4d6da"/><stop offset="1" stop-color="#f6f6f8"/></linearGradient>
<linearGradient id="ginfo" x1="0" y1="0" x2="0" y2="1"><stop offset="0" stop-color="#7890d0"/><stop offset=".35" stop-color="#3050b0"/><stop offset=".65" stop-color="#1030a0"/><stop offset="1" stop-color="#40d8f4"/></linearGradient>
<linearGradient id="gbtn" x1="0" y1="0" x2="0" y2="1"><stop offset="0" stop-color="#f6f6f6"/><stop offset=".5" stop-color="#ebebeb"/><stop offset="1" stop-color="#dcdcdc"/></linearGradient>
<linearGradient id="gclr" x1="0" y1="0" x2="0" y2="1"><stop offset="0" stop-color="#eaf6fd"/><stop offset="1" stop-color="#bfe3f7"/></linearGradient>
<linearGradient id="gtek" x1="0" y1="0" x2="0" y2="1"><stop offset="0" stop-color="#20c8c0"/><stop offset=".6" stop-color="#20b0a0"/><stop offset=".8" stop-color="#60d040"/><stop offset="1" stop-color="#e04020"/></linearGradient>
<g id="tek">
 <rect x="0" y="0" width="10" height="10" fill="#1424a0"/>
 <path d="M1.2 3.2 L4.2 2.6 L5 0.9 L5.8 2.6 L8.6 2.4 L8.6 9.2 L1.2 9.2 Z" fill="#1298b4"/>
 <path d="M5.8 2.6 L8.6 2.4 L8.6 9.2 L6.5 9.2 Z" fill="#0f80a8"/>
 <path d="M4.2 3.4 L5 0.9 L5.8 3.4 L5.9 6.2 L7.8 9.4 L2.2 9.4 L4.1 6.2 Z" fill="#1ed8b8"/>
 <ellipse cx="5" cy="8.2" rx="2.6" ry="1.6" fill="#70e040"/>
 <ellipse cx="5" cy="8.8" rx="1.9" ry="1.1" fill="#f06424"/>
 <rect x="0" y="9.3" width="10" height="0.7" fill="#1424a0"/>
</g>
</defs>
<!-- title icon -->
<use href="#tek" x="31" y="7"/>
<!-- menu icon -->
<use href="#tek" x="36" y="21"/>
<!-- caption buttons -->
<rect x="605.5" y="5" width="17" height="10.5" rx="1.5" fill="url(#gmin)" stroke="#6d7485" stroke-width="0.8"/>
<rect x="622.5" y="5" width="16.5" height="10.5" rx="1.5" fill="url(#gmin)" stroke="#6d7485" stroke-width="0.8"/>
<rect x="639" y="5" width="29" height="10.5" rx="1.5" fill="url(#gcls)" stroke="#7a3a30" stroke-width="0.8"/>
<rect x="610.5" y="10" width="7" height="2.6" rx="1" fill="#fff" stroke="#4a5060" stroke-width="0.6"/>
<rect x="627.5" y="6.6" width="6.5" height="6" rx="0.8" fill="none" stroke="#4a5060" stroke-width="1.9"/>
<rect x="627.5" y="6.6" width="6.5" height="6" rx="0.8" fill="none" stroke="#fff" stroke-width="1"/>
<path d="M651.3 7.6 L656 12.4 M656 7.6 L651.3 12.4" stroke="#6a3028" stroke-width="2.6" opacity=".8"/>
<path d="M651.3 7.6 L656 12.4 M656 7.6 L651.3 12.4" stroke="#f0f0f0" stroke-width="1.5"/>
<!-- mdi buttons -->
<rect x="637" y="27.5" width="4" height="1.2" fill="#888"/>
<rect x="650.5" y="24" width="4.5" height="3.5" fill="none" stroke="#111" stroke-width="1"/>
<rect x="648.5" y="25.8" width="4.5" height="3.5" fill="#fff" stroke="#111" stroke-width="1"/>
<path d="M662.3 24.3 L667.3 29.3 M667.3 24.3 L662.3 29.3" stroke="#111" stroke-width="1.4"/>
<!-- toolbar1 icons -->
<path d="M32.7 37.2 L36.3 37.2 L37.3 38.2 L41.6 38.2 L41.6 43.8 L32.7 43.8 Z" fill="#eab450"/>
<path d="M34 39.8 L43.4 39.8 L41.6 43.9 L32.7 43.9 Z" fill="#f9d27a"/>
<rect x="47.3" y="36.2" width="9.6" height="9.4" rx="1.2" fill="#3a8ee0"/>
<rect x="49.6" y="36.2" width="5" height="3" fill="#c8d8ec"/>
<rect x="51.6" y="36.6" width="1.6" height="2.2" fill="#3a5a8a"/>
<rect x="48.8" y="41" width="6.6" height="4" fill="#fbf4d0"/>
<rect x="61.3" y="37" width="1" height="8.5" fill="#c8c8c8"/>
<rect x="67" y="37" width="8.2" height="6" fill="#2a78c0"/>
<rect x="68" y="38.4" width="6.2" height="1.2" fill="#c8b878"/>
<rect x="65" y="39.1" width="9" height="6.6" fill="#2a80c8"/>
<rect x="65.6" y="39.6" width="7.8" height="1.8" fill="#14307a"/>
<rect x="65.8" y="41.4" width="7.4" height="3.4" fill="#f8f0b8"/>
<rect x="65.4" y="44.8" width="8.2" height="0.8" fill="#3a4050"/>
<rect x="80" y="37" width="1" height="8.5" fill="#c8c8c8"/>
<rect x="85.4" y="39.8" width="4.4" height="4.8" fill="#fff" stroke="#222" stroke-width="1"/>
<path d="M87.6 39.5 L90.5 37.1 L93 39.8 L90.5 42.5 L88.2 42.5" fill="none" stroke="#222" stroke-width="1"/>
<g transform="translate(102.9 41.3)">
 <g fill="#3560b8"><rect x="-0.9" y="-5" width="1.8" height="2.4" rx="0.3" transform="rotate(0)"/><rect x="-0.9" y="-5" width="1.8" height="2.4" rx="0.3" transform="rotate(45)"/><rect x="-0.9" y="-5" width="1.8" height="2.4" rx="0.3" transform="rotate(90)"/><rect x="-0.9" y="-5" width="1.8" height="2.4" rx="0.3" transform="rotate(135)"/><rect x="-0.9" y="-5" width="1.8" height="2.4" rx="0.3" transform="rotate(180)"/><rect x="-0.9" y="-5" width="1.8" height="2.4" rx="0.3" transform="rotate(225)"/><rect x="-0.9" y="-5" width="1.8" height="2.4" rx="0.3" transform="rotate(270)"/><rect x="-0.9" y="-5" width="1.8" height="2.4" rx="0.3" transform="rotate(315)"/></g>
 <circle r="3.7" fill="#3a68c0"/>
 <circle r="3.7" fill="none" stroke="#5a88d8" stroke-width="0.7" opacity=".8"/>
 <circle r="1.5" fill="#f4f6fc"/>
</g>
<path d="M113.9 38.2 H121 V40 H118.6 V45 H116.3 V40 H113.9 Z" fill="#c02424"/>
<path d="M126.3 38.4 Q128.5 36 131 38 Q133.5 40 136.8 37.5" fill="none" stroke="#f0c020" stroke-width="1.7"/>
<path d="M129 40.5 L133.5 40.5 L131.2 43 Z" fill="#2a80d8"/>
<rect x="130.5" y="39" width="1.6" height="2" fill="#2a80d8"/>
<rect x="128.6" y="43.8" width="5.4" height="2.2" fill="#a05018"/>
<rect x="142.2" y="37" width="5.4" height="7.8" fill="#fff" stroke="#d0b890" stroke-width="0.9"/>
<path d="M140.8 40.6 Q142.8 37.2 145.3 39.6 Q147.8 42 150.3 38.8" fill="none" stroke="#2a58c0" stroke-width="1.3"/>
<rect x="158" y="36.8" width="7.6" height="0.9" fill="#999"/>
<rect x="158" y="44.9" width="7.6" height="0.9" fill="#999"/>
<rect x="156.3" y="37" width="1.2" height="8.6" fill="#111"/>
<rect x="155.5" y="36.7" width="2.8" height="1.4" fill="#111"/>
<rect x="155.5" y="44.6" width="2.8" height="1.4" fill="#111"/>
<path d="M159.2 44 Q160.8 36 162.3 40.5 Q163.8 45 165.5 39" fill="none" stroke="#d04a20" stroke-width="1.2"/>
<rect x="169.5" y="37" width="1" height="8.5" fill="#c8c8c8"/>
<!-- input boxes -->
<rect x="214.5" y="34.8" width="58.5" height="12.8" fill="#fff" stroke="#e2e3e6" stroke-width="1"/>
<rect x="303.5" y="34.8" width="43.3" height="12.8" fill="#fff" stroke="#e2e3e6" stroke-width="1"/>
<!-- right toolbar -->
<rect x="526.3" y="36.6" width="20.7" height="9.3" rx="3" fill="url(#gpre)" stroke="#6ab8e8" stroke-width="0.5"/>
<rect x="551.2" y="37.3" width="1" height="8.3" fill="#c8c8c8"/>
<circle cx="558.8" cy="41.1" r="3.2" fill="#a6a6ae"/>
<path d="M604.3 40.9 L607.2 40.9 L605.75 42.3 Z" fill="#9a9a9a"/>
<rect x="613.3" y="37.3" width="1" height="8.3" fill="#c8c8c8"/>
<path d="M618.4 40.4 A3.5 3.5 0 1 1 619.3 43.8" fill="none" stroke="#1cb040" stroke-width="1.8"/>
<path d="M617.8 42.2 L621.2 44 L618.2 45.3 Z" fill="#109a30"/>
<path d="M662.9 40.3 L665.9 40.3 L664.4 42.1 Z" fill="#111"/>
<!-- toolbar2 -->
<rect x="60" y="50" width="59" height="13.5" fill="#fbfbfb"/>
<path d="M113.3 55.8 L116.9 55.8 L115.1 58.2 Z" fill="#111"/>
<rect x="121.3" y="52.8" width="1" height="8.2" fill="#c8c8c8"/>
<g fill="#ababab">
 <rect x="127.2" y="53.3" width="1.6" height="6.8"/>
 <path d="M134.3 53.3 V60.1 L129.3 56.7 Z"/>
 <path d="M147.6 53.3 V60.1 L142.2 56.7 Z"/>
 <circle cx="158.6" cy="56.7" r="3.4"/>
 <path d="M171 53.3 V60.1 L176.3 56.7 Z"/>
 <path d="M183.8 53.3 V60.1 L189.2 56.7 Z"/>
 <rect x="189.6" y="53.3" width="1.6" height="6.8"/>
 <path d="M197.8 53.3 V60.1 L202.2 56.7 Z"/>
 <path d="M202 53.3 V60.1 L206.6 56.7 Z"/>
 <rect x="232.7" y="53" width="1.5" height="7.5"/>
 <rect x="235.9" y="53" width="1.5" height="7.5"/>
 <rect x="245.7" y="53.9" width="6.7" height="5.9"/>
</g>
<path d="M213.9 55.3 A3.4 3.4 0 1 1 214.6 59.6" fill="none" stroke="#b2b2b8" stroke-width="1.4"/>
<path d="M213.2 57.6 L216.4 59.6 L213.6 60.6 Z" fill="#a0a0a8"/>
<rect x="226" y="52.8" width="1" height="8.2" fill="#c8c8c8"/>
<rect x="258.5" y="52.8" width="1" height="8.2" fill="#c8c8c8"/>
<circle cx="336" cy="56.8" r="5" fill="url(#ginfo)"/>
<circle cx="336" cy="53.6" r="0.9" fill="#d8f4ff"/>
<rect x="335.2" y="55.3" width="1.6" height="4.8" fill="#e0f8ff"/>
<rect x="345.2" y="52.8" width="1" height="8.2" fill="#c8c8c8"/>
<!-- trace header -->
<path d="M88.6 72.3 L92.15 75.8 L95.7 72.3" fill="none" stroke="#8888bc" stroke-width="1.1"/>
<rect x="148" y="70.9" width="7.2" height="7.2" fill="#fdfdfd" stroke="#8a96a8" stroke-width="0.8"/>
<path d="M149.6 74.3 L151.2 76.4 L154 71.8" fill="none" stroke="#1a3a8a" stroke-width="1.1"/>
<rect x="639.5" y="68" width="23" height="12.2" rx="1.5" fill="url(#gclr)" stroke="#3aa8e8" stroke-width="1.1"/>
<!-- left panel -->
<path d="M38.9 77.3 L43.2 71.2" fill="none" stroke="#e0d820" stroke-width="1"/>
<path d="M35.1 75.2 L36.3 74.3 L37.9 75.9 L42.5 70.4 L43 70.9 L38.6 77.4 L37.5 77.5 Z" fill="#141414"/>
<g>
 <circle cx="36.2" cy="89.1" r="2.1" fill="#5a6ab0"/><circle cx="36.2" cy="88.6" r="1.2" fill="#70c050"/>
 <circle cx="36.2" cy="103.8" r="2.1" fill="#5a6ab0"/><circle cx="36.2" cy="103.3" r="1.2" fill="#70c050"/>
 <circle cx="36.2" cy="125" r="2.1" fill="#5a6ab0"/><circle cx="36.2" cy="124.5" r="1.2" fill="#70c050"/>
 <circle cx="91.8" cy="462" r="2.1" fill="#5a6ab0"/><circle cx="91.8" cy="461.5" r="1.2" fill="#70c050"/>
 <circle cx="578.3" cy="461.5" r="2.1" fill="#5a6ab0"/><circle cx="578.3" cy="461" r="1.2" fill="#70c050"/>
</g>
<rect x="35.4" y="141.4" width="7" height="7.2" fill="url(#gchk)" stroke="#8e9298" stroke-width="0.9"/>
<!-- autoscale button -->
<rect x="35.5" y="456" width="43.2" height="11.6" rx="2" fill="url(#gbtn)" stroke="#8a8a8a" stroke-width="0.9"/>
<!-- status separators -->
<g fill="#d0d0d0">
 <rect x="100" y="472" width="1" height="13"/>
 <rect x="274.5" y="472" width="1" height="13"/>
 <rect x="316" y="472" width="1" height="13"/>
 <rect x="375" y="472" width="1" height="13"/>
 <rect x="408.2" y="472" width="1" height="13"/>
 <rect x="461" y="472" width="1" height="13"/>
 <rect x="496" y="472" width="1" height="13"/>
 <rect x="529.6" y="472" width="1" height="13"/>
</g>
<!-- red arrow -->
<path d="M-2 238.5 L56 209.2" stroke="#ff0000" stroke-width="3"/>
<path d="M52 203.6 L65.5 203.2 L57.6 214 Z" fill="#ff0000"/>
</svg>

<div class="t" id="ttl" style="left:44.00px;top:8.06px;font-size:8.2px;color:#1a1a2a;transform:scaleX(0.8662);">Tek RSA5100A</div>
<div class="t" id="m1" style="left:52.50px;top:22.36px;font-size:8.2px;color:#1e1e1e;transform:scaleX(0.9089);">File</div>
<div class="t" id="m2" style="left:75.50px;top:22.36px;font-size:8.2px;color:#1e1e1e;transform:scaleX(0.9370);">View</div>
<div class="t" id="m3" style="left:103.30px;top:22.36px;font-size:8.2px;color:#1e1e1e;transform:scaleX(0.8915);">Run</div>
<div class="t" id="m4" style="left:128.50px;top:22.36px;font-size:8.2px;color:#9a9a9a;transform:scaleX(0.8588);">Replay</div>
<div class="t" id="m5" style="left:162.20px;top:22.36px;font-size:8.2px;color:#1e1e1e;transform:scaleX(0.8892);">Markers</div>
<div class="t" id="m6" style="left:199.80px;top:22.36px;font-size:8.2px;color:#1e1e1e;transform:scaleX(0.8829);">Setup</div>
<div class="t" id="m7" style="left:230.40px;top:22.36px;font-size:8.2px;color:#1e1e1e;transform:scaleX(0.8572);">Presets</div>
<div class="t" id="m8" style="left:266.00px;top:22.36px;font-size:8.2px;color:#1e1e1e;transform:scaleX(0.9516);">Tools</div>
<div class="t" id="m9" style="left:296.00px;top:22.36px;font-size:8.2px;color:#1e1e1e;transform:scaleX(0.9476);">Window</div>
<div class="t" id="m10" style="left:335.40px;top:22.36px;font-size:8.2px;color:#1e1e1e;transform:scaleX(0.9321);">Help</div>
<div class="t" id="f1" style="left:175.10px;top:36.58px;font-size:8.0px;color:#1e1e1e;transform:scaleX(0.9018);">Frequency:</div>
<div class="t" id="f2" style="left:215.60px;top:36.58px;font-size:8.0px;color:#1e1e1e;transform:scaleX(0.8722);">11.0000 GHz</div>
<div class="t" id="f3" style="left:277.00px;top:36.58px;font-size:8.0px;color:#1e1e1e;transform:scaleX(0.8775);">RefLev:</div>
<div class="t" id="f4" style="left:304.60px;top:36.58px;font-size:8.0px;color:#1e1e1e;transform:scaleX(0.9168);">0.00 dBm</div>
<div class="t" id="r1" style="left:565.80px;top:36.48px;font-size:8.0px;color:#9c9c9c;transform:scaleX(0.8873);">Replay</div>
<div class="t" id="r2" style="left:627.90px;top:36.28px;font-size:8.0px;color:#1e1e1e;transform:scaleX(0.9533);">Stop</div>
<div class="t" id="p1" style="left:528.50px;top:36.66px;font-size:5.6px;color:#0a1a3a;transform:scaleX(0.9702);font-weight:bold;">Preset</div>
<div class="t" id="q1" style="left:32.30px;top:51.98px;font-size:8.0px;color:#1e1e1e;transform:scaleX(0.8885);">Replay:</div>
<div class="t" id="q2" style="left:61.80px;top:51.98px;font-size:8.0px;color:#1e1e1e;transform:scaleX(0.9178);">Acq Data</div>
<div class="t" id="q3" style="left:263.20px;top:51.68px;font-size:8.0px;color:#1e1e1e;transform:scaleX(0.9178);">Select All</div>
<div class="t" id="q4" style="left:299.90px;top:51.68px;font-size:8.0px;color:#1e1e1e;transform:scaleX(0.8787);">Select...</div>
<div class="t" id="h1" style="left:106.40px;top:70.86px;font-size:8.2px;color:#1e1e1e;transform:scaleX(0.9106);">Trace 1</div>
<div class="t" id="h2" style="left:156.80px;top:70.86px;font-size:8.2px;color:#1e1e1e;transform:scaleX(0.9519);">Show</div>
<div class="t" id="h3" style="left:182.80px;top:70.86px;font-size:8.2px;color:#1e1e1e;transform:scaleX(0.9077);">+Peak Normal</div>
<div class="t" id="c1" style="left:642.50px;top:69.98px;font-size:8.0px;color:#1e1e2e;transform:scaleX(0.8523);">Clear</div>
<div class="t" id="l1" style="left:42.50px;top:85.26px;font-size:8.2px;color:#1e1e1e;transform:scaleX(0.9587);">0.00 dBm</div>
<div class="t" id="l2" style="left:42.50px;top:99.06px;font-size:8.2px;color:#1e1e1e;transform:scaleX(0.9748);">dB/div:</div>
<div class="t" id="l3" style="left:42.50px;top:109.16px;font-size:8.2px;color:#1e1e1e;transform:scaleX(0.9634);">10.0 dB</div>
<div class="t" id="l4" style="left:42.80px;top:120.26px;font-size:8.2px;color:#1e1e1e;transform:scaleX(0.8759);">RBW:</div>
<div class="t" id="l5" style="left:42.50px;top:130.26px;font-size:8.2px;color:#1e1e1e;transform:scaleX(0.9563);">30.0 kHz</div>
<div class="t" id="l6" style="left:46.50px;top:141.86px;font-size:8.2px;color:#1e1e1e;transform:scaleX(0.9383);">VBW:</div>
<div class="t" id="l7" style="left:41.60px;top:445.96px;font-size:8.2px;color:#1e1e1e;transform:scaleX(0.9511);">-100.00 dBm</div>
<div class="t" id="b1" style="left:40.00px;top:458.06px;font-size:8.2px;color:#1e1e1e;transform:scaleX(0.9286);">Autoscale</div>
<div class="t" id="b2" style="left:97.60px;top:457.46px;font-size:8.2px;color:#1e1e1e;transform:scaleX(0.9603);">Start:</div>
<div class="t" id="b3" style="left:121.00px;top:457.46px;font-size:8.2px;color:#1e1e1e;transform:scaleX(0.9250);">2.00 GHz</div>
<div class="t" id="b4" style="left:584.00px;top:457.46px;font-size:8.2px;color:#1e1e1e;transform:scaleX(1.0353);">Stop:</div>
<div class="t" id="b5" style="left:606.80px;top:457.46px;font-size:8.2px;color:#1e1e1e;transform:scaleX(0.9300);">20.00 GHz</div>
<div class="t" id="s1" style="left:32.20px;top:475.56px;font-size:8.2px;color:#1e1e1e;transform:scaleX(0.8757);">Analyzing</div>
<div class="t" id="s2" style="left:103.00px;top:475.16px;font-size:8.2px;color:#1e1e1e;transform:scaleX(0.9201);">Acq Sampling params: manual control</div>
<div class="t" id="s3" style="left:276.90px;top:475.16px;font-size:8.2px;color:#1e1e1e;transform:scaleX(1.0103);">Swept</div>
<div class="t" id="s4" style="left:319.50px;top:475.16px;font-size:8.2px;color:#1e1e1e;transform:scaleX(1.0146);">Trig In (front)</div>
<div class="t" id="s5" style="left:377.90px;top:475.16px;font-size:8.2px;color:#1e1e1e;transform:scaleX(1.0263);">Ref: Int</div>
<div class="t" id="s6" style="left:410.60px;top:475.16px;font-size:8.2px;color:#1e1e1e;transform:scaleX(1.0243);">Atten: 5 dB</div>

</body></html>
